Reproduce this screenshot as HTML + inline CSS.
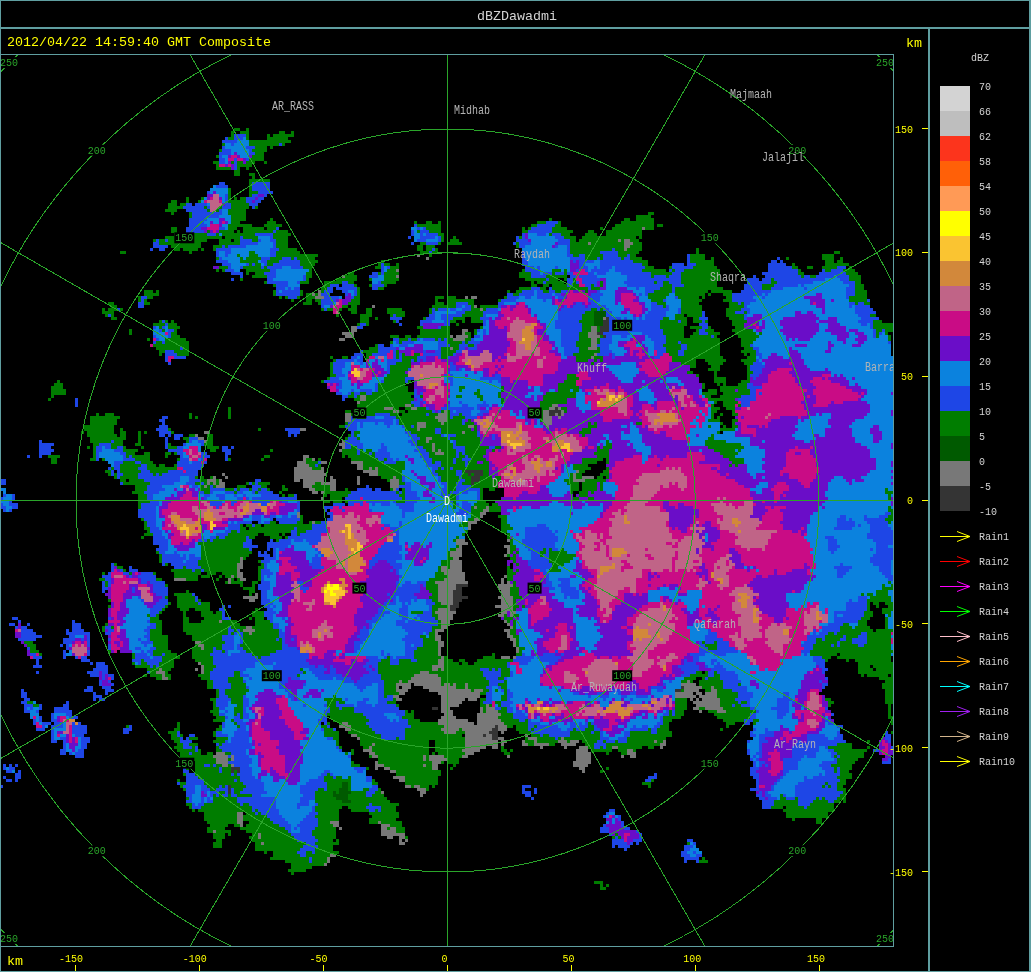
<!DOCTYPE html>
<html><head><meta charset="utf-8"><title>dBZDawadmi</title>
<style>html,body{margin:0;padding:0;background:#000;overflow:hidden}svg{display:block}text{font-family:"Liberation Mono",monospace;white-space:pre}.b{font-size:13.33px}.s{font-size:10px}</style></head><body>
<svg width="1031" height="972" viewBox="0 0 1031 972">
<rect width="1031" height="972" fill="#000"/>
<defs><clipPath id="mc"><rect x="1" y="55" width="892" height="891"/></clipPath></defs>
<g clip-path="url(#mc)">
<!--RADAR-->
<defs><clipPath id="t1"><rect x="0.0" y="55.0" width="300.0" height="300.0"/></clipPath><clipPath id="t2"><rect x="0.0" y="355.0" width="300.0" height="300.0"/></clipPath><clipPath id="t3"><rect x="0.0" y="655.0" width="300.0" height="291.0"/></clipPath><clipPath id="t4"><rect x="300.0" y="55.0" width="300.0" height="300.0"/></clipPath><clipPath id="t5"><rect x="400.0" y="205.0" width="200.0" height="150.0"/></clipPath><clipPath id="t6"><rect x="300.0" y="355.0" width="200.0" height="150.0"/></clipPath><clipPath id="t7"><rect x="500.0" y="355.0" width="200.0" height="150.0"/></clipPath><clipPath id="t8"><rect x="700.0" y="355.0" width="200.0" height="150.0"/></clipPath><clipPath id="t9"><rect x="300.0" y="505.0" width="200.0" height="150.0"/></clipPath><clipPath id="t10"><rect x="500.0" y="505.0" width="200.0" height="150.0"/></clipPath><clipPath id="t11"><rect x="700.0" y="505.0" width="200.0" height="150.0"/></clipPath><clipPath id="t12"><rect x="300.0" y="655.0" width="200.0" height="150.0"/></clipPath><clipPath id="t13"><rect x="500.0" y="655.0" width="200.0" height="150.0"/></clipPath><clipPath id="t14"><rect x="700.0" y="655.0" width="200.0" height="150.0"/></clipPath><clipPath id="t15"><rect x="300.0" y="805.0" width="300.0" height="141.0"/></clipPath><clipPath id="t16"><rect x="600.0" y="805.0" width="293.0" height="141.0"/></clipPath><clipPath id="t17"><rect x="600.0" y="205.0" width="300.0" height="150.0"/></clipPath><clipPath id="t18"><rect x="200.0" y="450.0" width="200.0" height="200.0"/></clipPath><clipPath id="t19"><rect x="675.0" y="282.0" width="90.0" height="158.0"/></clipPath><clipPath id="t20"><rect x="320.0" y="715.0" width="75.0" height="80.0"/></clipPath><filter id="rough" x="0" y="50" width="900" height="900" filterUnits="userSpaceOnUse" color-interpolation-filters="sRGB"><feTurbulence type="fractalNoise" baseFrequency="0.1" numOctaves="4" seed="7" result="n"/><feDisplacementMap in="SourceGraphic" in2="n" scale="20" xChannelSelector="R" yChannelSelector="G" result="d"/><feFlood x="1" y="51" width="1" height="1" flood-color="#000"/><feComposite width="3" height="3"/><feTile result="t"/><feComposite in="d" in2="t" operator="in"/><feMorphology operator="dilate" radius="1"/></filter></defs>
<g filter="url(#rough)" shape-rendering="crispEdges"><g clip-path="url(#t1)">
<path d="M216.0 167.7L222.2 138.3L234.6 132.2L248.5 126.6L250.0 135.2L262.3 139.9L277.8 135.9L293.2 132.8L293.2 138.3L277.8 144.5L265.4 147.6L265.4 161.5L246.9 167.7L228.4 172.3Z" fill="#007d00"/>
<path d="M217.6 166.1L223.8 139.9L236.1 133.7L246.9 132.2L248.5 144.5L256.2 147.6L254.6 156.9L234.6 166.1Z" fill="#1e46e6"/>
<path d="M228.4 147.6L243.8 139.9L250.0 147.6L246.9 156.9L228.4 159.9Z" fill="#0b82de"/>
<path d="M219.8 164.6L231.5 155.3L246.9 153.8L246.9 159.9L228.4 166.7Z" fill="#6a0dc8"/>
<path d="M220.7 163.6L234.6 156.9L246.9 155.3L240.7 161.5L225.3 166.1Z" fill="#c90c85"/>
<path d="M276.2 141.4L282.4 139.9L282.4 143.9L276.2 144.5Z" fill="#1e46e6"/>
<path d="M162.0 214.0L166.7 206.2L179.0 202.5L185.2 199.4L197.5 201.6L206.8 190.8L223.8 182.2L229.9 187.7L233.0 197.0L222.2 209.3L203.7 217.0L191.4 215.5L185.2 209.3L172.8 210.9Z" fill="#007d00"/>
<path d="M179.0 209.3L188.3 203.1L200.6 203.1L205.2 192.3L223.8 183.1L229.9 190.8L228.4 201.6L216.0 210.9L200.6 214.0L185.2 212.4Z" fill="#1e46e6"/>
<path d="M202.2 200.1L209.9 190.8L222.2 187.7L226.9 197.0L219.1 209.3L205.2 210.9Z" fill="#0b82de"/>
<path d="M206.2 198.5L213.0 193.3L222.2 197.0L220.7 206.2L209.9 210.9Z" fill="#6a0dc8"/>
<path d="M207.7 200.1L214.5 194.8L222.2 199.4L219.8 206.9L209.9 209.3Z" fill="#c90c85"/>
<path d="M209.3 200.7L215.4 197.0L220.7 201.6L217.6 207.8L209.9 208.4Z" fill="#c06487"/>
<path d="M148.1 247.9L166.7 230.9L185.2 232.5L191.4 215.5L216.0 209.3L234.6 200.1L246.9 190.8L250.0 180.0L265.4 176.9L274.7 187.7L262.3 200.1L246.9 209.3L243.8 227.8L228.4 235.6L203.7 240.2L197.5 251.0L182.1 252.5L172.8 244.8L160.5 244.8Z" fill="#007d00"/>
<path d="M149.1 247.9L163.6 238.6L172.8 243.3L169.8 249.4L157.4 246.4Z" fill="#1e46e6"/>
<path d="M182.1 230.9L191.4 217.0L216.0 210.9L231.5 206.2L228.4 227.8L213.0 234.0L197.5 235.6L185.2 234.0Z" fill="#1e46e6"/>
<path d="M243.8 203.1L251.5 187.7L268.5 181.5L273.1 189.3L262.3 198.5L250.0 207.8Z" fill="#1e46e6"/>
<path d="M200.6 230.9L206.8 218.6L222.2 215.5L231.5 209.3L229.9 226.3L216.0 232.5Z" fill="#0b82de"/>
<path d="M204.3 227.8L213.0 220.1L222.2 221.7L219.1 230.3L208.3 232.5Z" fill="#6a0dc8"/>
<path d="M206.2 227.2L214.5 221.7L221.6 223.2L217.6 230.3L209.3 231.5Z" fill="#c90c85"/>
<path d="M250.0 200.1L256.2 190.8L262.3 192.3L256.2 203.1Z" fill="#6a0dc8"/>
<path d="M213.0 252.5L222.2 240.2L246.9 227.8L256.2 217.0L257.7 227.8L274.7 220.1L277.8 227.8L285.5 229.4L287.0 246.4L300.0 252.5L300.0 298.8L287.0 300.4L274.7 294.2L271.6 281.9L262.3 277.2L246.9 271.0L237.7 280.3L228.4 271.0L217.6 271.0Z" fill="#007d00"/>
<path d="M214.5 255.6L222.2 246.4L243.8 240.2L265.4 234.0L276.2 232.5L274.7 252.5L262.3 264.9L246.9 268.0L237.7 278.8L229.9 271.0L219.1 268.0Z" fill="#1e46e6"/>
<path d="M260.8 272.6L271.6 264.9L287.0 255.6L300.0 258.7L300.0 295.7L287.0 298.8L276.2 292.7L273.1 281.9Z" fill="#1e46e6"/>
<path d="M222.2 252.5L246.9 243.3L271.6 237.1L271.6 249.4L259.3 261.8L246.9 264.9L237.7 274.1L231.5 264.9L222.2 261.8Z" fill="#0b82de"/>
<path d="M240.7 260.2L251.5 251.0L262.3 258.7L251.5 268.0Z" fill="#007d00"/>
<path d="M271.6 274.1L287.0 264.9L300.0 268.0L300.0 283.4L284.0 289.6Z" fill="#0b82de"/>
<path d="M216.0 264.9L219.8 261.8L219.8 269.5L217.0 270.1Z" fill="#6a0dc8"/>
<path d="M116.7 258.7L120.4 255.0L122.2 257.2L118.8 260.9Z" fill="#007d00"/>
<path d="M135.8 301.9L145.1 291.1L159.0 288.0L159.0 294.2L151.2 298.8L145.1 306.5L138.9 309.6Z" fill="#007d00"/>
<path d="M137.3 301.9L142.0 297.3L148.1 298.8L143.5 308.1L138.9 308.7Z" fill="#1e46e6"/>
<path d="M104.9 314.3L111.1 305.0L123.5 304.4L125.0 309.6L118.8 317.3L112.7 315.8Z" fill="#007d00"/>
<path d="M112.7 311.2L117.3 306.5L121.0 310.6L116.7 315.8Z" fill="#1e46e6"/>
<path d="M128.1 337.4L131.2 320.4L134.3 317.3L134.3 326.6L132.1 337.4Z" fill="#007d00"/>
<path d="M148.1 339.0L154.3 328.1L169.8 319.8L175.9 323.5L177.5 332.8L188.3 343.6L189.8 355.0L160.5 355.0L154.3 343.6Z" fill="#007d00"/>
<path d="M149.7 339.0L155.9 329.7L169.8 321.0L171.3 332.8L163.6 342.0L154.3 343.6Z" fill="#1e46e6"/>
<path d="M154.3 332.8L165.1 323.5L169.8 326.6L163.6 337.4L155.9 340.5Z" fill="#0b82de"/>
<path d="M151.2 340.5L159.0 332.8L160.5 336.5L153.7 343.6Z" fill="#c90c85"/>
<path d="M160.5 355.0L166.7 348.2L179.0 348.2L185.2 355.0Z" fill="#1e46e6"/>
<path d="M293.2 168.6L300.0 166.7L300.0 169.8L293.2 170.7Z" fill="#007d00"/>
</g>
<g clip-path="url(#t2)">
<path d="M162.0 355.0L183.6 355.0L179.0 362.7L168.2 364.3Z" fill="#1e46e6"/>
<path d="M166.7 357.5L172.8 356.5L174.4 360.6L168.2 361.2Z" fill="#c90c85"/>
<path d="M47.8 399.8L52.5 384.3L66.4 382.2L66.4 387.4L58.6 395.1L50.9 401.3Z" fill="#007d00"/>
<path d="M74.1 404.4L78.7 393.6L80.9 395.1L77.2 406.9Z" fill="#1e46e6"/>
<path d="M38.6 453.8L41.7 443.0L49.4 444.5L50.9 453.8L43.2 456.9Z" fill="#1e46e6"/>
<path d="M49.4 453.8L57.1 452.2L58.6 464.6L52.5 461.5Z" fill="#007d00"/>
<path d="M22.2 461.5L25.3 455.3L25.9 462.4Z" fill="#1e46e6"/>
<path d="M0.0 475.4L4.6 478.5L6.2 490.8L15.4 503.1L13.9 514.0L6.2 512.4L0.0 506.2Z" fill="#1e46e6"/>
<path d="M1.5 487.7L6.2 492.3L10.8 503.1L7.7 509.3L2.5 503.1Z" fill="#0b82de"/>
<path d="M223.8 412.1L229.9 402.8L236.1 412.1L233.0 416.7L226.9 416.1Z" fill="#007d00"/>
<path d="M192.9 413.6L196.6 413.0L196.6 416.7L192.9 417.3Z" fill="#007d00"/>
<path d="M143.5 409.0L145.7 407.5L145.1 413.0Z" fill="#007d00"/>
<path d="M256.2 427.5L261.7 427.5L261.7 432.2L256.2 432.2Z" fill="#007d00"/>
<path d="M287.0 429.1L291.7 425.4L297.8 426.6L300.0 424.4L300.0 435.2L290.1 435.9Z" fill="#1e46e6"/>
<path d="M294.8 424.4L300.0 423.5L300.0 430.6L296.3 429.1Z" fill="#007d00"/>
<path d="M263.9 453.8L271.6 450.7L273.1 456.9L265.4 458.4Z" fill="#007d00"/>
<path d="M293.2 467.7L300.0 466.1L300.0 478.5L294.8 478.5Z" fill="#787878"/>
<path d="M221.6 453.8L226.9 444.5L230.9 447.6L229.9 459.9L225.3 463.0Z" fill="#1e46e6"/>
<path d="M225.3 459.9L230.9 456.9L229.9 466.1L226.9 466.1Z" fill="#007d00"/>
<path d="M163.6 432.2L169.8 429.1L170.4 456.9L166.0 456.9Z" fill="#007d00"/>
<path d="M154.3 429.1L160.5 418.3L166.7 419.8L168.2 435.2L169.8 450.7L165.1 453.8L162.0 435.2Z" fill="#1e46e6"/>
<path d="M137.3 441.4L142.0 429.1L145.7 430.6L140.4 447.6Z" fill="#007d00"/>
<path d="M79.6 427.5L89.5 421.4L98.8 418.3L117.3 412.1L118.8 432.2L123.5 444.5L135.8 450.7L154.3 459.9L166.7 469.2L175.9 456.9L180.6 435.2L194.4 431.5L213.0 438.3L216.0 447.6L209.9 459.9L203.7 469.2L203.7 478.5L228.4 480.0L246.9 484.6L256.2 480.0L265.4 478.5L268.5 487.7L300.0 489.3L300.0 552.5L290.1 555.6L277.8 552.5L265.4 540.2L256.2 552.5L243.8 552.5L243.8 577.2L234.6 586.5L222.2 584.9L213.0 571.0L197.5 577.2L188.3 583.4L174.4 577.2L172.8 568.0L160.5 561.8L154.3 540.2L145.1 534.0L142.0 521.7L137.3 509.3L142.0 500.1L132.7 500.1L132.7 484.6L120.4 481.5L108.0 472.3L104.9 461.5L92.6 459.9L91.0 438.3L80.9 435.9Z" fill="#007d00"/>
<path d="M197.5 433.7L206.8 433.7L205.2 439.9L197.5 439.9Z" fill="#787878"/>
<path d="M205.2 480.0L228.4 480.0L226.9 486.2L206.8 486.2Z" fill="#787878"/>
<path d="M225.3 581.9L237.7 578.8L243.8 552.5L239.2 552.5L236.1 571.0L225.3 577.2Z" fill="#787878"/>
<path d="M172.8 575.7L185.2 577.2L185.2 583.4L175.9 581.9Z" fill="#787878"/>
<path d="M92.6 458.4L95.7 444.5L104.9 441.4L123.5 444.5L123.5 453.8L135.8 459.9L148.1 469.2L160.5 476.9L175.9 472.3L179.0 438.3L194.4 435.9L205.2 444.5L203.7 459.9L197.5 478.5L216.0 487.7L234.6 490.8L246.9 490.8L262.3 487.7L277.8 492.3L300.0 493.9L300.0 527.8L290.1 534.0L271.6 530.9L259.3 527.8L246.9 534.0L228.4 537.1L216.0 540.2L206.8 546.4L206.8 564.9L197.5 571.0L182.1 571.0L166.7 564.9L160.5 552.5L151.2 534.0L145.1 518.6L140.4 506.2L148.1 500.1L145.1 481.5L135.8 478.5L123.5 484.6L117.3 476.9L109.6 472.3L108.0 463.0Z" fill="#1e46e6"/>
<path d="M120.4 463.0L132.7 459.9L142.0 472.3L135.8 478.5L123.5 481.5Z" fill="#007d00"/>
<path d="M98.8 456.9L101.9 446.0L117.3 447.6L123.5 459.9L111.1 466.1Z" fill="#0b82de"/>
<path d="M154.3 503.1L160.5 487.7L172.8 481.5L185.2 478.5L197.5 484.6L216.0 490.8L234.6 495.4L253.1 493.9L277.8 497.0L300.0 500.1L300.0 521.7L277.8 524.8L256.2 523.2L240.7 527.8L222.2 534.0L209.9 540.2L200.6 552.5L185.2 558.7L172.8 555.6L163.6 540.2L157.4 521.7Z" fill="#0b82de"/>
<path d="M180.6 444.5L188.3 439.9L200.6 444.5L200.6 459.9L191.4 464.6L182.1 459.9Z" fill="#0b82de"/>
<path d="M157.4 509.3L166.7 500.1L179.0 490.8L185.2 484.6L197.5 487.7L209.9 497.0L228.4 500.1L246.9 498.5L271.6 500.1L293.2 503.1L300.0 504.7L300.0 515.5L277.8 518.6L256.2 518.6L240.7 521.7L222.2 530.9L203.7 540.2L191.4 549.4L179.0 552.5L169.8 540.2L163.6 524.8Z" fill="#6a0dc8"/>
<path d="M160.5 512.4L169.8 506.2L182.1 493.9L188.3 487.7L197.5 493.9L209.9 501.6L234.6 503.1L256.2 500.1L277.8 501.6L296.3 506.2L296.3 512.4L277.8 514.0L256.2 515.5L237.7 518.6L222.2 526.3L203.7 537.1L191.4 543.3L182.1 540.2L175.9 552.5L172.8 540.2L166.7 527.8Z" fill="#c90c85"/>
<path d="M183.6 447.6L192.9 444.5L200.6 453.8L197.5 463.0L188.3 461.5Z" fill="#c90c85"/>
<path d="M177.5 466.1L183.6 463.0L185.2 472.3L179.0 473.8Z" fill="#c90c85"/>
<path d="M180.6 487.7L188.3 484.6L191.4 492.3L183.6 495.4Z" fill="#c90c85"/>
<path d="M168.2 515.5L175.9 510.9L191.4 518.6L203.7 503.1L216.0 506.2L234.6 507.8L246.9 503.1L271.6 503.1L271.6 507.8L253.1 510.9L234.6 514.0L222.2 521.7L216.0 530.9L203.7 532.5L191.4 537.1L179.0 534.0L171.3 524.8Z" fill="#c06487"/>
<path d="M188.3 450.7L196.0 449.1L197.5 458.4L189.8 458.4Z" fill="#c06487"/>
<path d="M182.1 487.7L188.3 487.1L188.9 492.3L183.0 493.0Z" fill="#c06487"/>
<path d="M171.3 518.6L179.0 515.5L191.4 524.8L200.6 515.5L206.8 509.3L216.0 512.4L219.1 526.3L209.9 529.4L197.5 530.9L185.2 535.6L175.9 527.8Z" fill="#d2883b"/>
<path d="M259.3 503.1L271.6 502.5L271.6 506.2L259.3 506.9Z" fill="#d2883b"/>
<path d="M182.1 526.3L186.7 524.8L187.7 532.5L183.0 533.4Z" fill="#fac431"/>
<path d="M208.3 521.7L213.0 521.0L213.6 529.4L209.3 530.3Z" fill="#fac431"/>
<path d="M243.8 540.2L253.1 537.1L256.2 546.4L246.9 551.0Z" fill="#1e46e6"/>
<path d="M246.9 598.8L256.2 571.0L262.3 555.6L271.6 546.4L290.1 555.6L300.0 552.5L300.0 655.0L234.6 655.0L243.8 632.8L256.2 617.3Z" fill="#007d00"/>
<path d="M259.3 568.0L271.6 546.4L284.0 540.2L300.0 540.2L300.0 655.0L271.6 655.0L265.4 632.8L262.3 608.1L268.5 589.6Z" fill="#1e46e6"/>
<path d="M268.5 571.0L277.8 552.5L290.1 546.4L300.0 547.9L300.0 632.8L284.0 639.0L274.7 620.4L271.6 595.7Z" fill="#0b82de"/>
<path d="M274.7 558.7L284.0 549.4L300.0 552.5L300.0 626.6L287.0 629.7L280.9 611.2L284.0 589.6L277.8 571.0Z" fill="#6a0dc8"/>
<path d="M277.8 555.6L287.0 552.5L293.2 564.9L300.0 571.0L300.0 620.4L290.1 623.5L287.0 601.9L290.1 583.4L282.4 568.0Z" fill="#c90c85"/>
<path d="M290.1 589.6L300.0 583.4L300.0 601.9L293.2 605.0Z" fill="#c06487"/>
<path d="M246.9 597.3L251.5 595.7L251.5 601.9L246.9 603.5Z" fill="#787878"/>
<path d="M240.7 629.7L256.2 625.1L256.2 632.8L243.8 635.9Z" fill="#787878"/>
<path d="M256.2 537.1L262.3 534.0L268.5 540.2L265.4 552.5L259.3 555.6L256.2 546.4Z" fill="#000000"/>
<path d="M175.9 595.7L185.2 592.7L197.5 598.8L213.0 611.2L228.4 614.3L243.8 623.5L246.9 635.9L234.6 655.0L188.3 655.0L197.5 639.0L185.2 632.8L182.1 614.3Z" fill="#007d00"/>
<path d="M185.2 611.2L194.4 605.0L203.7 614.3L200.6 626.6L189.8 623.5Z" fill="#000000"/>
<path d="M189.8 589.6L197.5 594.2L203.7 601.9L205.2 611.2L199.1 605.0L192.9 598.8Z" fill="#1e46e6"/>
<path d="M216.0 611.2L225.3 606.5L231.5 617.3L228.4 626.6L220.7 620.4Z" fill="#1e46e6"/>
<path d="M216.0 632.8L234.6 629.7L246.9 639.0L240.7 655.0L213.0 655.0L222.2 642.0Z" fill="#1e46e6"/>
<path d="M228.4 642.0L237.7 639.0L240.7 651.3L231.5 655.0Z" fill="#0b82de"/>
<path d="M213.0 614.3L219.1 612.7L222.2 629.7L216.0 631.2Z" fill="#787878"/>
<path d="M191.4 642.0L200.6 640.5L200.6 646.7L191.4 648.2Z" fill="#787878"/>
<path d="M101.9 580.3L109.6 571.0L118.8 563.3L129.6 568.0L138.9 572.6L149.7 575.7L160.5 575.7L168.2 589.6L168.2 605.0L160.5 617.3L157.4 626.6L166.7 639.0L172.8 655.0L108.0 655.0L106.5 617.3L108.0 595.7Z" fill="#007d00"/>
<path d="M103.4 589.6L108.0 583.4L106.5 577.2L111.1 571.0L118.8 564.9L129.6 569.5L138.9 574.1L149.7 577.2L160.5 578.8L166.7 592.7L163.6 608.1L154.3 620.4L154.3 632.8L160.5 648.2L154.3 655.0L109.6 655.0L108.0 620.4L109.6 598.8Z" fill="#1e46e6"/>
<path d="M114.2 601.9L123.5 589.6L135.8 595.7L145.1 601.9L154.3 601.9L148.1 617.3L145.1 632.8L151.2 648.2L135.8 655.0L123.5 655.0L117.3 632.8Z" fill="#0b82de"/>
<path d="M108.0 589.6L112.7 574.1L118.8 568.0L129.6 574.1L138.9 578.8L148.1 583.4L157.4 589.6L160.5 601.9L154.3 611.2L145.1 598.8L135.8 592.7L129.6 595.7L126.5 611.2L123.5 626.6L129.6 639.0L126.5 655.0L112.7 655.0L109.6 626.6Z" fill="#6a0dc8"/>
<path d="M111.1 589.6L115.7 575.7L121.9 572.6L132.7 580.3L145.1 584.9L154.3 592.7L157.4 601.9L151.2 601.9L142.0 592.7L129.6 586.5L121.9 589.6L118.8 608.1L115.7 626.6L120.4 642.0L117.3 655.0L113.6 655.0L111.7 626.6Z" fill="#c90c85"/>
<path d="M118.8 577.2L129.6 581.9L142.0 586.5L151.2 594.2L154.3 601.9L148.1 598.8L138.9 591.1L126.5 584.9Z" fill="#c06487"/>
<path d="M114.2 623.5L118.8 620.4L121.9 632.8L117.3 635.9Z" fill="#c06487"/>
<path d="M148.1 614.3L160.5 617.3L166.7 639.0L172.8 655.0L154.3 655.0L151.2 632.8Z" fill="#007d00"/>
<path d="M135.8 639.0L148.1 635.9L151.2 645.1L138.9 648.2Z" fill="#1e46e6"/>
<path d="M63.3 648.2L69.4 632.8L72.5 623.5L81.8 626.6L89.5 635.9L92.6 655.0L66.4 655.0Z" fill="#1e46e6"/>
<path d="M69.4 645.1L74.1 632.8L83.3 634.3L88.0 648.2L86.4 655.0L71.0 655.0Z" fill="#0b82de"/>
<path d="M71.0 646.7L75.6 637.4L84.9 639.0L88.0 651.3L86.4 655.0L72.5 655.0Z" fill="#6a0dc8"/>
<path d="M72.5 648.2L77.2 640.5L84.9 642.0L86.4 655.0L74.1 655.0Z" fill="#c90c85"/>
<path d="M74.7 649.8L78.7 643.6L83.3 646.7L84.0 655.0L75.6 655.0Z" fill="#c06487"/>
<path d="M12.3 617.3L17.0 615.8L24.7 629.7L30.9 626.6L35.5 639.0L37.0 655.0L27.8 655.0L18.5 639.0Z" fill="#1e46e6"/>
<path d="M13.9 620.4L18.5 623.5L24.7 639.0L29.3 655.0L26.2 655.0L17.0 632.8Z" fill="#6a0dc8"/>
<path d="M15.4 625.1L19.1 626.6L23.1 639.0L21.0 640.5Z" fill="#c90c85"/>
<path d="M17.9 629.7L20.4 630.3L22.2 637.4L19.1 636.5Z" fill="#c06487"/>
<path d="M29.3 645.1L35.5 642.0L37.0 655.0L30.9 655.0Z" fill="#007d00"/>
<path d="M100.3 581.9L103.4 580.3L104.9 592.7L101.9 591.1Z" fill="#1e46e6"/>
</g>
<g clip-path="url(#t3)">
<path d="M26.2 650.0L37.0 650.0L40.1 671.6L35.5 665.4L29.3 656.2Z" fill="#1e46e6"/>
<path d="M29.3 651.5L34.0 651.5L34.6 659.3L30.9 657.7Z" fill="#c90c85"/>
<path d="M63.3 650.0L91.0 650.0L88.0 659.3L81.8 662.3L71.0 654.6Z" fill="#1e46e6"/>
<path d="M74.1 650.0L86.4 650.0L83.3 657.7L77.2 654.6Z" fill="#c90c85"/>
<path d="M89.5 663.9L98.8 662.3L108.0 668.5L115.7 690.1L108.0 694.8L98.8 680.9Z" fill="#1e46e6"/>
<path d="M98.8 671.6L106.5 673.1L111.1 687.0L106.5 688.6Z" fill="#6a0dc8"/>
<path d="M101.9 676.2L106.5 677.2L108.6 685.5L104.9 684.6Z" fill="#c90c85"/>
<path d="M84.0 685.5L89.5 684.6L100.3 697.8L95.7 702.5L89.5 696.3Z" fill="#1e46e6"/>
<path d="M18.5 691.7L21.6 689.5L29.3 702.5L38.6 705.6L46.3 724.1L45.7 733.3L38.6 731.8L30.9 717.9L23.1 705.6Z" fill="#1e46e6"/>
<path d="M27.8 705.6L37.0 708.6L43.2 724.1L38.6 727.2L30.9 714.8Z" fill="#0b82de"/>
<path d="M35.5 714.8L40.1 716.4L42.6 727.2L38.6 725.6Z" fill="#c90c85"/>
<path d="M27.8 704.0L32.4 703.1L33.3 708.6L29.3 709.3Z" fill="#007d00"/>
<path d="M50.9 711.7L55.6 707.1L66.4 703.1L72.5 716.4L81.8 730.2L91.0 747.2L77.2 758.6L64.8 754.9L57.1 742.6L50.9 727.2Z" fill="#1e46e6"/>
<path d="M54.0 716.4L64.8 708.6L72.5 724.1L83.3 742.6L75.6 753.4L66.4 748.8L60.2 736.4Z" fill="#0b82de"/>
<path d="M57.1 717.9L64.8 711.7L72.5 727.2L78.7 742.6L72.5 748.8L64.8 739.5L60.2 727.2Z" fill="#6a0dc8"/>
<path d="M59.3 719.4L65.4 713.3L72.5 728.7L74.1 741.0L67.9 739.5L61.7 728.7Z" fill="#c90c85"/>
<path d="M61.1 724.1L66.4 719.4L71.6 730.2L69.4 738.0L64.2 731.8Z" fill="#c06487"/>
<path d="M69.4 719.4L72.5 718.5L73.5 724.1L70.4 724.7Z" fill="#d2883b"/>
<path d="M3.1 767.3L12.3 760.5L17.0 765.7L19.1 779.6L23.1 785.8L18.5 785.8L9.3 779.6Z" fill="#1e46e6"/>
<path d="M7.7 768.8L13.0 765.7L15.4 776.5L10.8 776.5Z" fill="#0b82de"/>
<path d="M0.0 785.8L2.5 787.3L1.5 790.4L0.0 789.5Z" fill="#1e46e6"/>
<path d="M122.8 727.2L125.9 725.0L128.1 728.7L125.0 730.2Z" fill="#007d00"/>
<path d="M124.1 728.7L129.6 727.8L129.6 731.8L125.0 732.1Z" fill="#1e46e6"/>
<path d="M123.5 650.0L188.3 650.0L172.8 662.3L168.2 676.2L169.8 687.0L160.5 680.9L151.2 676.2L138.9 665.4L129.6 657.7Z" fill="#007d00"/>
<path d="M126.5 650.0L166.7 650.0L160.5 662.3L151.2 668.5L138.9 660.8Z" fill="#1e46e6"/>
<path d="M132.7 650.0L154.3 650.0L151.2 657.7L142.0 656.2Z" fill="#0b82de"/>
<path d="M157.4 668.5L165.1 667.0L166.7 680.9L169.8 687.0L165.1 684.0L160.5 676.2Z" fill="#787878"/>
<path d="M188.3 650.0L300.0 650.0L300.0 872.2L290.1 870.7L284.0 859.9L271.6 855.2L262.3 856.8L254.6 849.1L253.1 835.2L245.4 827.5L234.6 825.9L225.3 833.6L223.8 844.4L214.5 842.9L206.8 832.1L205.2 819.8L197.5 810.5L186.7 804.3L182.1 792.0L179.0 779.6L185.2 771.9L192.9 768.8L192.9 759.6L182.1 758.0L171.3 741.0L172.8 722.5L185.2 731.8L197.5 742.6L205.2 754.9L214.5 756.5L217.6 742.6L216.0 721.0L211.4 693.2L200.6 668.5L194.4 659.3Z" fill="#007d00"/>
<path d="M213.0 680.9L216.0 668.5L209.9 650.0L300.0 650.0L300.0 847.5L290.1 835.2L277.8 822.8L265.4 816.7L253.1 804.3L243.8 788.9L234.6 773.5L228.4 754.9L220.7 748.8L222.2 724.1L216.0 699.4Z" fill="#1e46e6"/>
<path d="M228.4 680.9L237.7 668.5L246.9 687.0L243.8 711.7L234.6 724.1L229.9 705.6Z" fill="#007d00"/>
<path d="M225.3 705.6L231.5 699.4L237.7 727.2L231.5 742.6L225.3 730.2Z" fill="#0b82de"/>
<path d="M246.9 668.5L265.4 659.3L277.8 674.7L284.0 693.2L300.0 705.6L300.0 835.2L287.0 822.8L277.8 804.3L265.4 792.0L253.1 773.5L246.9 748.8L243.8 724.1L250.0 699.4Z" fill="#0b82de"/>
<path d="M250.0 711.7L256.2 696.3L268.5 687.0L277.8 696.3L287.0 711.7L300.0 721.0L300.0 785.8L290.1 785.8L277.8 779.6L262.3 773.5L253.1 754.9L250.0 733.3Z" fill="#6a0dc8"/>
<path d="M253.1 714.8L257.7 702.5L262.3 705.6L265.4 724.1L274.7 742.6L284.0 761.1L287.0 779.6L277.8 776.5L265.4 767.3L256.2 748.8L253.1 730.2Z" fill="#c90c85"/>
<path d="M277.8 696.3L287.0 702.5L300.0 717.9L300.0 742.6L290.1 730.2L280.9 717.9Z" fill="#c90c85"/>
<path d="M254.6 711.7L258.6 707.1L261.7 721.0L258.6 727.2Z" fill="#c06487"/>
<path d="M287.0 674.7L296.3 677.8L300.0 687.0L300.0 699.4L290.1 690.1Z" fill="#6a0dc8"/>
<path d="M182.1 773.5L191.4 771.9L200.6 779.6L211.4 788.9L213.0 801.2L203.7 807.4L192.9 807.4L185.2 795.1Z" fill="#1e46e6"/>
<path d="M192.9 788.9L200.6 785.8L209.9 795.1L205.2 804.3L196.0 802.8Z" fill="#0b82de"/>
<path d="M197.5 793.5L203.7 792.0L206.2 799.7L200.0 801.2Z" fill="#6a0dc8"/>
<path d="M177.5 731.8L183.6 730.9L192.9 742.6L197.5 751.9L191.4 753.4L183.6 742.6Z" fill="#1e46e6"/>
<path d="M213.0 782.7L228.4 785.8L243.8 798.1L256.2 801.2L257.7 807.4L243.8 804.3L228.4 795.1L216.0 790.4Z" fill="#1e46e6"/>
<path d="M203.7 762.7L209.9 761.1L220.7 768.8L216.0 771.9Z" fill="#1e46e6"/>
<path d="M213.0 756.5L220.7 754.9L231.5 761.1L234.6 768.8L225.3 767.3L216.0 762.7Z" fill="#787878"/>
<path d="M225.3 781.2L233.0 782.7L236.1 792.0L229.9 793.5Z" fill="#343434"/>
<path d="M231.5 765.7L239.2 768.8L240.7 773.5L234.6 771.9Z" fill="#343434"/>
<path d="M234.6 816.7L242.3 815.1L243.8 821.3L236.1 822.8Z" fill="#787878"/>
<path d="M242.3 815.1L246.9 816.7L248.5 822.8L243.8 822.8Z" fill="#000000"/>
<path d="M259.3 835.2L265.4 834.6L266.0 839.8L259.9 840.7Z" fill="#787878"/>
<path d="M196.0 663.9L203.7 665.4L203.7 670.1L197.5 669.1Z" fill="#787878"/>
<path d="M209.9 836.7L213.0 835.2L213.6 838.9Z" fill="#787878"/>
</g>
<g clip-path="url(#t4)">
<path d="M411.1 240.2L418.8 224.8L429.6 223.2L442.6 227.8L443.5 243.3L435.8 251.0L421.9 254.1L415.7 247.9Z" fill="#007d00"/>
<path d="M410.5 240.2L415.7 229.4L423.5 227.2L429.6 232.5L440.4 237.1L438.9 244.8L429.6 247.9L418.8 246.4Z" fill="#1e46e6"/>
<path d="M414.2 237.1L418.8 229.4L423.5 230.9L425.0 238.6L418.8 243.3Z" fill="#0b82de"/>
<path d="M428.1 237.1L435.8 237.1L438.3 241.7L431.2 244.8Z" fill="#0b82de"/>
<path d="M451.2 238.6L456.8 238.6L456.8 243.9L451.2 243.9Z" fill="#007d00"/>
<path d="M414.8 254.1L425.0 254.1L425.0 257.2L414.8 257.2Z" fill="#787878"/>
<path d="M300.0 249.4L309.3 251.0L317.0 255.6L313.9 271.0L306.2 283.4L300.0 298.8Z" fill="#007d00"/>
<path d="M300.0 264.9L306.2 268.0L303.1 283.4L300.0 289.6Z" fill="#1e46e6"/>
<path d="M300.0 266.4L304.6 268.6L301.5 278.8L300.0 280.3Z" fill="#0b82de"/>
<path d="M370.4 288.0L374.1 271.0L383.3 264.9L397.2 263.3L400.3 271.0L392.6 284.9L377.2 292.0Z" fill="#007d00"/>
<path d="M371.6 286.5L375.6 272.6L384.9 268.0L389.5 274.1L383.3 284.9L375.6 289.6Z" fill="#1e46e6"/>
<path d="M375.6 280.3L379.6 272.6L384.9 272.6L382.7 281.9L377.2 284.9Z" fill="#0b82de"/>
<path d="M394.1 272.6L399.4 271.0L398.8 278.8L395.1 278.8Z" fill="#787878"/>
<path d="M300.0 301.9L312.3 292.7L330.9 281.9L346.3 274.1L355.6 275.7L357.1 286.5L364.8 295.7L358.6 305.0L346.3 311.2L330.9 311.2L318.5 305.0L306.2 306.5Z" fill="#007d00"/>
<path d="M318.5 298.8L327.8 289.6L346.3 281.9L355.6 283.4L357.1 298.8L346.3 308.1L330.9 309.6L321.6 303.5Z" fill="#1e46e6"/>
<path d="M329.3 292.7L338.6 288.0L343.2 292.0L334.0 296.4Z" fill="#000000"/>
<path d="M327.8 301.9L337.0 297.3L349.4 289.6L354.0 294.2L349.4 305.0L337.0 308.7Z" fill="#0b82de"/>
<path d="M329.3 305.0L340.1 295.7L350.9 292.7L350.9 301.9L340.1 308.7L330.9 309.6Z" fill="#6a0dc8"/>
<path d="M330.9 306.5L340.1 298.8L346.3 298.8L343.2 306.5L334.0 310.6Z" fill="#c90c85"/>
<path d="M330.9 306.5L338.6 301.9L340.1 305.6L333.3 309.6Z" fill="#c06487"/>
<path d="M312.3 298.8L321.6 292.7L323.1 297.3L315.4 301.9Z" fill="#787878"/>
<path d="M343.2 275.7L350.9 274.1L350.9 278.8L344.8 278.8Z" fill="#787878"/>
<path d="M357.1 323.5L361.7 311.2L372.5 306.5L377.2 311.2L369.4 320.4L366.4 328.1L360.2 329.7Z" fill="#007d00"/>
<path d="M358.6 325.1L363.3 320.4L366.4 323.5L363.3 328.1Z" fill="#1e46e6"/>
<path d="M334.0 339.0L346.3 334.3L357.1 325.1L358.6 329.7L350.9 337.4L346.3 343.6L337.0 342.0Z" fill="#787878"/>
<path d="M366.4 308.1L375.6 304.4L380.2 306.5L375.6 309.6Z" fill="#787878"/>
<path d="M374.1 320.4L380.2 317.3L381.8 321.0L375.6 322.9Z" fill="#007d00"/>
<path d="M386.4 311.2L392.6 305.6L406.5 306.5L408.0 314.3L401.9 322.0L392.6 322.9L395.7 315.8L388.0 314.3Z" fill="#007d00"/>
<path d="M387.0 310.6L390.1 308.7L390.1 312.7Z" fill="#1e46e6"/>
<path d="M392.6 320.4L398.8 315.8L403.4 317.3L398.8 322.0Z" fill="#1e46e6"/>
<path d="M392.6 306.5L398.8 305.6L398.8 308.1L392.6 308.7Z" fill="#787878"/>
<path d="M516.0 240.2L522.2 227.8L537.7 223.2L551.5 218.6L565.4 227.8L577.8 237.1L590.1 232.5L600.0 230.9L600.0 295.7L577.8 292.7L562.3 289.6L543.8 284.9L528.4 281.9L520.7 277.2L520.7 268.0L526.9 260.2L516.0 252.5Z" fill="#007d00"/>
<path d="M517.6 240.2L522.2 230.9L534.6 227.8L550.0 221.7L557.7 230.9L562.3 243.3L571.6 252.5L584.0 264.9L600.0 268.0L600.0 283.4L577.8 283.4L565.4 277.2L546.9 274.1L534.6 268.0L528.4 261.8L522.2 252.5Z" fill="#1e46e6"/>
<path d="M528.4 240.2L543.8 234.0L556.2 237.1L565.4 252.5L577.8 268.0L571.6 277.2L553.1 271.0L540.7 264.9Z" fill="#0b82de"/>
<path d="M565.4 255.6L577.8 252.5L585.5 258.7L600.0 252.5L600.0 295.7L577.8 286.5L571.6 271.0Z" fill="#6a0dc8"/>
<path d="M574.7 274.1L580.9 268.0L585.5 271.0L577.8 280.3Z" fill="#c90c85"/>
<path d="M580.9 240.2L600.0 234.0L600.0 252.5L585.5 257.2Z" fill="#007d00"/>
<path d="M585.5 240.2L596.3 237.1L596.3 241.7L587.0 243.9Z" fill="#787878"/>
<path d="M361.7 355.0L371.0 345.1L392.6 340.5L418.8 334.3L423.5 320.4L435.8 306.5L437.3 297.3L451.2 298.8L468.2 294.2L472.8 301.9L485.2 308.1L500.6 301.9L516.0 291.1L534.6 284.9L562.3 289.6L600.0 295.7L600.0 355.0Z" fill="#007d00"/>
<path d="M448.1 332.8L460.5 323.5L468.2 317.3L472.8 323.5L463.6 332.8L454.3 337.4Z" fill="#000000"/>
<path d="M435.8 298.8L445.1 297.3L443.5 301.9L435.8 303.5Z" fill="#787878"/>
<path d="M465.1 295.7L471.3 295.1L471.3 301.9L466.7 301.9Z" fill="#787878"/>
<path d="M420.4 326.6L429.6 314.3L445.1 305.0L463.6 301.9L466.7 311.2L454.3 317.3L445.1 326.6L432.7 332.8L423.5 334.3Z" fill="#1e46e6"/>
<path d="M429.6 320.4L442.0 311.2L454.3 306.5L460.5 309.6L448.1 317.3L435.8 326.6Z" fill="#0b82de"/>
<path d="M371.0 355.0L380.2 345.1L401.9 342.0L423.5 337.4L445.1 334.3L448.1 342.0L432.7 348.2L417.3 355.0Z" fill="#1e46e6"/>
<path d="M389.5 346.7L404.9 343.6L417.3 342.0L411.1 348.2L395.7 351.3Z" fill="#0b82de"/>
<path d="M392.6 355.0L401.9 348.2L423.5 343.6L435.8 342.0L429.6 349.8L417.3 355.0Z" fill="#6a0dc8"/>
<path d="M404.9 355.0L411.1 349.8L423.5 346.7L420.4 355.0Z" fill="#c90c85"/>
<path d="M472.8 355.0L482.1 332.8L485.2 314.3L497.5 305.0L516.0 292.7L534.6 286.5L562.3 291.1L600.0 298.8L600.0 355.0Z" fill="#1e46e6"/>
<path d="M451.2 334.3L466.7 332.8L466.7 340.5L454.3 340.5Z" fill="#787878"/>
<path d="M485.2 332.8L491.4 311.2L509.9 298.8L525.3 295.7L546.9 298.8L562.3 301.9L571.6 295.7L600.0 301.9L600.0 355.0L479.0 355.0Z" fill="#0b82de"/>
<path d="M488.3 332.8L497.5 311.2L509.9 301.9L525.3 301.9L543.8 311.2L556.2 301.9L568.5 298.8L577.8 301.9L600.0 305.0L600.0 355.0L482.1 355.0Z" fill="#6a0dc8"/>
<path d="M492.9 355.0L497.5 326.6L503.7 308.1L516.0 301.9L525.3 311.2L537.7 323.5L550.0 339.0L556.2 355.0Z" fill="#c90c85"/>
<path d="M509.9 355.0L513.0 323.5L516.0 311.2L525.3 317.3L534.6 329.7L543.8 345.1L546.9 355.0Z" fill="#c06487"/>
<path d="M523.8 339.0L528.4 326.6L533.0 332.8L531.5 345.1L526.9 346.7Z" fill="#d2883b"/>
<path d="M526.9 337.4L529.0 334.3L529.9 338.3L527.8 339.6Z" fill="#fac431"/>
<path d="M562.3 301.9L577.8 295.7L600.0 292.7L600.0 305.0L577.8 308.1L565.4 311.2Z" fill="#c90c85"/>
<path d="M577.8 355.0L584.0 332.8L600.0 326.6L600.0 355.0Z" fill="#0b82de"/>
<path d="M590.1 320.4L600.0 314.3L600.0 332.8L593.2 332.8Z" fill="#007d00"/>
</g>
<g clip-path="url(#t5)">
<path d="M400.0 205.0L600.0 205.0L600.0 355.0L400.0 355.0Z" fill="#000000"/>
<path d="M410.7 241.9L418.4 224.4L429.1 223.4L441.7 228.3L443.6 245.7L434.9 250.6L421.3 252.5L412.6 246.7Z" fill="#007d00"/>
<path d="M410.1 239.9L413.6 230.2L421.3 227.3L427.2 232.2L438.8 236.0L441.7 243.8L429.1 248.6L419.4 243.8L412.6 243.8Z" fill="#1e46e6"/>
<path d="M412.6 238.9L415.5 231.2L421.3 229.2L424.2 234.1L419.4 240.9Z" fill="#0b82de"/>
<path d="M427.2 238.0L436.9 237.0L439.8 242.8L431.0 246.7Z" fill="#0b82de"/>
<path d="M451.4 238.0L456.8 238.0L456.8 243.8L451.4 243.8Z" fill="#007d00"/>
<path d="M414.5 254.5L425.2 254.5L425.2 257.0L414.5 257.0Z" fill="#787878"/>
<path d="M516.4 241.9L520.3 230.2L531.9 225.4L543.5 223.4L551.3 219.0L561.0 223.4L566.8 230.2L574.6 238.0L582.3 238.9L589.1 233.1L600.0 230.2L600.0 286.5L574.6 290.4L566.8 290.4L555.2 286.5L539.7 282.6L526.1 280.7L520.3 276.8L521.2 271.0L525.1 265.1L520.3 253.5Z" fill="#007d00"/>
<path d="M516.4 239.9L521.2 231.2L531.9 228.3L545.5 224.4L553.2 220.5L555.2 228.3L564.9 236.0L568.8 247.7L576.5 255.4L584.3 261.3L600.0 259.3L600.0 286.5L580.4 282.6L570.7 282.6L564.9 274.8L555.2 271.9L547.4 278.7L535.8 276.8L528.0 271.0L524.2 263.2L521.2 251.6Z" fill="#1e46e6"/>
<path d="M524.2 245.7L530.0 236.0L539.7 232.2L549.4 230.2L553.2 238.0L561.0 243.8L564.9 253.5L570.7 263.2L568.8 271.0L559.1 269.0L547.4 272.9L535.8 269.0L528.0 261.3Z" fill="#0b82de"/>
<path d="M524.2 236.0L529.0 234.1L529.6 238.9L525.1 239.9Z" fill="#6a0dc8"/>
<path d="M551.3 239.9L559.1 241.9L560.0 246.7L553.2 245.7Z" fill="#6a0dc8"/>
<path d="M568.8 261.3L574.6 259.3L576.5 269.0L570.7 271.9Z" fill="#6a0dc8"/>
<path d="M573.6 273.9L579.4 270.0L585.3 271.9L580.4 279.7L575.6 279.7Z" fill="#c90c85"/>
<path d="M553.2 274.8L561.0 271.0L566.8 273.9L565.9 281.6L555.2 282.6Z" fill="#007d00"/>
<path d="M559.1 278.7L566.8 279.7L566.8 282.6L559.1 281.6Z" fill="#000000"/>
<path d="M584.3 239.9L592.0 238.9L592.0 241.9L585.3 242.8Z" fill="#787878"/>
<path d="M586.2 263.2L600.0 261.3L600.0 269.0L588.2 271.0Z" fill="#0b82de"/>
<path d="M400.0 307.8L405.8 308.8L407.8 315.6L403.9 321.4L400.0 322.4Z" fill="#007d00"/>
<path d="M400.0 316.5L402.9 316.0L402.9 319.5L400.0 319.8Z" fill="#1e46e6"/>
<path d="M419.4 323.3L427.2 313.6L435.9 305.9L437.8 298.1L447.5 296.2L458.2 300.1L466.0 297.1L469.8 295.2L472.7 300.1L476.6 305.9L481.5 307.8L487.3 303.9L497.0 300.1L508.6 294.2L520.3 287.4L535.8 284.5L555.2 287.4L566.8 290.4L600.0 286.5L600.0 355.0L400.0 355.0L400.0 336.9L411.6 335.0L421.3 329.2Z" fill="#007d00"/>
<path d="M452.4 325.3L464.0 316.5L473.7 319.5L477.6 329.2L476.6 336.9L466.0 333.0L458.2 336.9L451.4 335.0Z" fill="#000000"/>
<path d="M451.4 335.0L467.9 333.0L467.9 340.8L454.3 341.8Z" fill="#787878"/>
<path d="M466.0 295.2L471.8 294.6L472.2 301.0L466.9 300.1Z" fill="#787878"/>
<path d="M474.7 304.9L480.5 305.9L480.5 308.8L475.3 308.2Z" fill="#787878"/>
<path d="M420.4 324.3L429.1 315.6L438.8 309.8L450.4 304.9L464.0 303.0L471.8 307.8L466.0 313.6L456.3 317.5L448.5 325.3L438.8 329.2L425.2 329.2Z" fill="#1e46e6"/>
<path d="M429.1 319.5L438.8 313.6L450.4 308.8L462.1 306.8L464.0 310.7L454.3 314.6L444.6 321.4L434.9 325.3Z" fill="#0b82de"/>
<path d="M425.2 326.2L431.0 321.4L438.8 321.4L440.7 326.2L431.0 329.2Z" fill="#6a0dc8"/>
<path d="M400.0 340.8L411.6 338.9L423.3 336.9L438.8 338.9L446.6 340.8L444.6 348.5L438.8 355.0L400.0 355.0Z" fill="#1e46e6"/>
<path d="M403.9 344.7L415.5 340.8L429.1 340.8L436.9 344.7L429.1 350.5L411.6 350.5Z" fill="#0b82de"/>
<path d="M400.0 348.5L409.7 346.6L423.3 347.6L431.0 350.5L427.2 355.0L400.0 355.0Z" fill="#6a0dc8"/>
<path d="M411.6 355.0L415.5 351.5L425.2 351.5L423.3 355.0Z" fill="#c90c85"/>
<path d="M444.6 344.7L450.4 343.7L450.4 348.5L445.6 349.5Z" fill="#787878"/>
<path d="M477.6 321.4L483.4 311.7L491.2 305.9L500.9 301.0L512.5 295.2L524.2 290.4L539.7 288.4L555.2 291.3L568.8 292.3L600.0 288.4L600.0 355.0L450.4 355.0L458.2 348.5L471.8 340.8L477.6 336.9L479.5 329.2Z" fill="#1e46e6"/>
<path d="M481.5 329.2L487.3 317.5L497.0 309.8L508.6 302.0L520.3 297.1L535.8 296.2L547.4 298.1L555.2 296.2L566.8 300.1L561.0 309.8L555.2 321.4L561.0 333.0L568.8 344.7L570.7 355.0L464.0 355.0L469.8 348.5L477.6 340.8Z" fill="#0b82de"/>
<path d="M466.0 355.0L471.8 346.6L481.5 340.8L487.3 329.2L491.2 319.5L497.0 311.7L508.6 303.9L520.3 302.0L531.9 309.8L539.7 321.4L547.4 333.0L555.2 344.7L561.0 355.0Z" fill="#6a0dc8"/>
<path d="M500.9 313.6L508.6 307.8L520.3 305.9L530.0 313.6L537.7 325.3L543.5 336.9L551.3 348.5L553.2 355.0L508.6 355.0L506.7 340.8L502.8 329.2L497.0 321.4Z" fill="#c90c85"/>
<path d="M508.6 321.4L511.5 313.6L518.3 315.6L526.1 323.3L533.9 329.2L535.8 340.8L539.7 348.5L535.8 355.0L514.5 355.0L512.5 340.8Z" fill="#c06487"/>
<path d="M520.3 336.9L524.2 327.2L531.9 325.3L533.9 333.0L530.0 340.8L533.9 348.5L530.0 350.5L524.2 344.7Z" fill="#d2883b"/>
<path d="M524.2 337.9L527.1 335.0L529.0 337.9L526.1 339.8Z" fill="#fac431"/>
<path d="M553.2 302.0L564.9 296.2L586.2 288.4L595.9 294.2L586.2 302.0L570.7 309.8L559.1 309.8Z" fill="#6a0dc8"/>
<path d="M555.2 303.9L564.9 298.1L574.6 294.2L586.2 290.4L592.0 296.2L582.3 300.1L572.6 305.9L562.9 307.8Z" fill="#c90c85"/>
<path d="M564.9 313.6L574.6 309.8L582.3 321.4L580.4 340.8L574.6 355.0L568.8 355.0L562.9 336.9L559.1 321.4Z" fill="#1e46e6"/>
<path d="M582.3 321.4L590.1 309.8L600.0 305.9L600.0 355.0L580.4 355.0L579.4 336.9Z" fill="#007d00"/>
<path d="M591.1 327.2L595.9 325.3L597.9 340.8L594.0 352.4L591.1 348.5Z" fill="#787878"/>
<path d="M594.0 313.6L600.0 311.7L600.0 325.3L595.0 325.3Z" fill="#005a00"/>
</g>
<g clip-path="url(#t6)">
<path d="M300.0 355.0L500.0 355.0L500.0 505.0L300.0 505.0Z" fill="#007d00"/>
<path d="M300.0 355.0L340.7 355.0L331.0 364.7L327.2 384.1L336.9 393.8L350.4 398.6L360.1 399.6L358.2 405.4L350.4 413.2L345.6 419.0L344.6 432.6L341.7 440.4L342.7 455.9L334.9 452.0L325.2 455.9L311.6 452.0L300.0 455.9Z" fill="#000000"/>
<path d="M325.2 463.6L331.0 459.8L342.7 457.8L354.3 465.6L364.0 471.4L377.6 473.3L389.2 471.4L391.2 479.2L388.3 488.9L377.6 486.9L364.0 488.9L356.3 486.9L350.4 490.8L334.9 488.9L327.2 479.2Z" fill="#000000"/>
<path d="M407.7 383.1L414.5 383.1L414.5 395.7L408.6 396.7Z" fill="#000000"/>
<path d="M395.1 405.4L404.8 407.4L405.7 413.2L397.0 413.2Z" fill="#000000"/>
<path d="M482.3 490.8L500.0 488.9L500.0 505.0L486.2 505.0Z" fill="#000000"/>
<path d="M328.1 386.0L332.0 368.6L340.7 357.9L346.6 355.0L400.9 355.0L397.0 364.7L391.2 370.5L383.4 376.3L379.5 389.9L366.0 396.7L352.4 396.7L338.8 392.8Z" fill="#1e46e6"/>
<path d="M338.8 378.3L344.6 366.6L358.2 360.8L377.6 358.9L387.3 362.8L385.4 372.5L377.6 384.1L366.0 391.9L352.4 392.8L342.7 388.0Z" fill="#0b82de"/>
<path d="M346.6 376.3L350.4 368.6L364.0 364.7L377.6 363.7L381.5 368.6L375.7 378.3L364.0 386.0L354.3 386.0Z" fill="#6a0dc8"/>
<path d="M348.5 376.3L351.4 369.5L364.0 366.6L376.6 365.7L377.6 370.5L371.8 378.3L362.1 384.1L354.3 384.1Z" fill="#c90c85"/>
<path d="M351.4 374.4L354.3 369.5L364.0 368.6L367.9 372.5L362.1 378.3L356.3 379.2Z" fill="#c06487"/>
<path d="M351.4 373.4L355.3 370.5L358.2 371.5L354.3 374.4Z" fill="#fac431"/>
<path d="M329.1 386.0L333.0 382.2L338.8 384.1L338.8 389.9L332.0 390.9Z" fill="#6a0dc8"/>
<path d="M330.1 386.0L333.9 383.5L337.8 386.0L334.9 389.9Z" fill="#c90c85"/>
<path d="M360.1 355.0L393.1 355.0L389.2 359.8L373.7 360.8L364.0 358.9Z" fill="#c90c85"/>
<path d="M367.9 355.0L387.3 355.0L383.4 357.9L371.8 358.5Z" fill="#c06487"/>
<path d="M404.8 380.2L408.6 366.6L416.4 358.9L424.2 355.0L500.0 355.0L500.0 442.3L490.1 446.2L482.3 440.4L474.6 432.6L468.8 422.9L464.9 413.2L455.2 417.1L445.5 413.2L435.8 413.2L424.2 409.3L416.4 397.7L415.4 384.1Z" fill="#1e46e6"/>
<path d="M451.3 374.4L461.0 370.5L474.6 372.5L486.2 380.2L500.0 382.2L500.0 409.3L486.2 405.4L474.6 409.3L466.8 405.4L455.2 409.3L447.4 401.6L449.4 386.0Z" fill="#0b82de"/>
<path d="M455.2 389.9L461.0 388.0L462.9 393.8L457.1 394.8Z" fill="#007d00"/>
<path d="M474.6 393.8L482.3 392.8L482.3 399.6L475.6 399.6Z" fill="#007d00"/>
<path d="M405.7 376.3L412.5 364.7L424.2 358.9L447.4 356.9L449.4 366.6L447.4 380.2L449.4 393.8L445.5 411.3L435.8 412.2L425.1 407.4L418.3 393.8L416.4 380.2Z" fill="#6a0dc8"/>
<path d="M406.7 374.4L414.5 365.7L426.1 362.8L443.5 359.8L447.4 366.6L446.5 380.2L447.4 391.9L443.5 407.4L435.8 409.3L426.1 405.4L421.2 391.9L419.3 380.2Z" fill="#c90c85"/>
<path d="M406.7 373.4L416.4 367.6L431.9 364.7L443.5 366.6L445.5 376.3L443.5 389.9L435.8 392.8L424.2 389.9L420.3 380.2L412.5 378.3Z" fill="#c06487"/>
<path d="M414.5 372.5L420.3 371.5L421.2 374.4L415.4 375.4Z" fill="#d2883b"/>
<path d="M426.1 384.1L435.8 381.2L439.7 386.0L431.9 388.9Z" fill="#d2883b"/>
<path d="M428.0 397.7L435.8 395.7L439.7 401.6L433.9 405.4L429.0 403.5Z" fill="#c06487"/>
<path d="M451.3 355.0L500.0 355.0L500.0 372.5L486.2 376.3L470.7 372.5L459.1 368.6L453.2 362.8Z" fill="#6a0dc8"/>
<path d="M455.2 355.0L500.0 355.0L500.0 368.6L484.3 372.5L470.7 368.6L461.0 364.7Z" fill="#c90c85"/>
<path d="M461.0 355.0L494.0 355.0L490.1 364.7L474.6 366.6L464.9 362.8Z" fill="#c06487"/>
<path d="M464.9 361.8L474.6 360.8L475.6 364.7L466.8 365.7Z" fill="#d2883b"/>
<path d="M468.8 421.0L474.6 413.2L486.2 409.3L500.0 405.4L500.0 442.3L490.1 444.2L480.4 436.5L472.6 430.7Z" fill="#6a0dc8"/>
<path d="M470.7 421.0L476.5 415.1L488.2 412.2L500.0 409.3L500.0 438.4L490.1 438.4L480.4 432.6Z" fill="#c90c85"/>
<path d="M472.6 421.0L480.4 417.1L494.0 415.1L500.0 417.1L500.0 432.6L486.2 431.6L478.5 427.7Z" fill="#c06487"/>
<path d="M478.5 422.9L486.2 421.0L489.1 424.8L481.4 426.8Z" fill="#d2883b"/>
<path d="M478.5 455.9L488.2 450.1L500.0 446.2L500.0 475.3L492.0 471.4L484.3 465.6Z" fill="#6a0dc8"/>
<path d="M486.2 455.9L494.0 452.0L500.0 452.0L500.0 469.5L494.0 467.5Z" fill="#c90c85"/>
<path d="M345.6 432.6L346.6 422.9L356.3 417.1L373.7 416.1L391.2 417.1L400.9 421.0L408.6 428.7L416.4 440.4L424.2 452.0L433.9 463.6L441.6 475.3L447.4 488.9L451.3 505.0L408.6 505.0L404.8 494.7L393.1 488.9L391.2 479.2L385.4 471.4L377.6 463.6L366.0 457.8L354.3 452.0L346.6 442.3Z" fill="#1e46e6"/>
<path d="M358.2 424.8L373.7 420.0L389.2 421.0L400.9 426.8L408.6 436.5L416.4 448.1L426.1 461.7L435.8 475.3L443.5 490.8L445.5 505.0L416.4 505.0L414.5 490.8L404.8 481.1L397.0 471.4L385.4 459.8L373.7 452.0L362.1 444.2L356.3 434.5Z" fill="#0b82de"/>
<path d="M400.9 452.0L408.6 455.9L416.4 463.6L412.5 467.5L404.8 461.7Z" fill="#6a0dc8"/>
<path d="M416.4 471.4L426.1 479.2L435.8 490.8L431.9 494.7L422.2 486.9Z" fill="#6a0dc8"/>
<path d="M428.0 498.5L435.8 496.6L437.7 505.0L430.0 505.0Z" fill="#6a0dc8"/>
<path d="M352.4 436.5L358.2 434.5L358.2 440.4L353.3 441.3Z" fill="#007d00"/>
<path d="M435.8 428.7L443.5 426.8L455.2 436.5L464.9 450.1L470.7 459.8L464.9 463.6L455.2 452.0L445.5 440.4Z" fill="#1e46e6"/>
<path d="M451.3 463.6L459.1 467.5L466.8 479.2L461.0 483.0L453.2 473.3Z" fill="#1e46e6"/>
<path d="M439.7 430.7L444.5 429.7L455.2 440.4L451.3 442.3Z" fill="#0b82de"/>
<path d="M416.4 424.8L424.2 421.0L428.0 424.8L424.2 430.7L418.3 429.7Z" fill="#787878"/>
<path d="M431.9 417.1L447.4 417.1L447.4 421.9L431.9 421.9Z" fill="#787878"/>
<path d="M424.2 436.5L431.9 438.4L433.9 446.2L426.1 444.2Z" fill="#787878"/>
<path d="M461.0 428.7L468.8 430.7L468.8 438.4L462.0 436.5Z" fill="#787878"/>
<path d="M433.9 448.1L443.5 452.0L443.5 455.9L435.8 453.9Z" fill="#787878"/>
<path d="M377.6 403.5L385.4 402.5L393.1 409.3L400.9 413.2L397.0 415.1L385.4 409.3Z" fill="#787878"/>
<path d="M408.6 401.6L416.4 401.6L416.4 407.4L408.6 407.4Z" fill="#787878"/>
<path d="M358.2 400.6L364.0 399.6L364.0 403.5L358.2 404.5Z" fill="#787878"/>
<path d="M468.8 469.5L480.4 471.4L484.3 479.2L474.6 481.1Z" fill="#343434"/>
<path d="M464.9 432.6L468.8 432.6L468.8 437.4L464.9 437.4Z" fill="#343434"/>
<path d="M451.3 490.8L464.9 481.1L474.6 485.0L480.4 490.8L478.5 505.0L453.2 505.0Z" fill="#1e46e6"/>
<path d="M455.2 494.7L466.8 488.9L474.6 494.7L470.7 505.0L457.1 505.0Z" fill="#0b82de"/>
<path d="M300.0 455.9L311.6 452.0L325.2 455.9L327.2 471.4L325.2 481.1L311.6 483.0L300.0 479.2Z" fill="#787878"/>
<path d="M305.8 457.8L317.5 455.9L323.3 463.6L315.5 471.4L307.8 467.5Z" fill="#007d00"/>
<path d="M304.8 455.9L307.8 454.9L308.1 457.8L305.4 458.8Z" fill="#1e46e6"/>
<path d="M307.8 469.5L319.4 471.4L321.3 479.2L309.7 479.2Z" fill="#000000"/>
<path d="M300.0 483.0L325.2 481.1L334.9 488.9L350.4 490.8L356.3 486.9L364.0 488.9L377.6 486.9L388.3 488.9L408.6 505.0L300.0 505.0Z" fill="#007d00"/>
<path d="M300.0 483.0L307.8 483.0L309.7 490.8L300.0 492.7Z" fill="#787878"/>
<path d="M325.2 488.9L334.9 490.8L333.0 498.5L325.2 496.6Z" fill="#787878"/>
<path d="M342.7 488.9L348.5 488.9L348.5 492.7L342.7 492.7Z" fill="#787878"/>
<path d="M354.3 479.2L360.1 479.2L360.1 483.0L354.3 483.0Z" fill="#787878"/>
<path d="M389.2 479.2L397.0 481.1L397.0 490.8L391.2 488.9Z" fill="#787878"/>
<path d="M346.6 505.0L350.4 494.7L362.1 490.8L377.6 490.8L385.4 494.7L391.2 505.0Z" fill="#1e46e6"/>
<path d="M354.3 500.5L362.1 494.7L375.7 494.7L377.6 500.5L373.7 505.0L356.3 505.0Z" fill="#0b82de"/>
<path d="M348.5 505.0L350.4 499.5L358.2 497.6L366.0 499.5L364.0 505.0Z" fill="#6a0dc8"/>
<path d="M351.4 505.0L353.3 500.5L358.2 499.5L362.1 502.4L360.1 505.0Z" fill="#c90c85"/>
<path d="M301.0 425.8L306.8 427.7L302.9 432.6Z" fill="#787878"/>
<path d="M300.0 422.9L301.9 421.9L301.9 425.8L300.0 425.8Z" fill="#007d00"/>
<path d="M345.6 417.1L352.4 415.1L353.3 420.0L346.6 421.9Z" fill="#787878"/>
<path d="M341.7 440.4L345.6 441.3L345.6 455.9L342.7 455.9Z" fill="#787878"/>
</g>
<g clip-path="url(#t7)">
<path d="M500.0 355.0L700.0 355.0L700.0 505.0L500.0 505.0Z" fill="#6a0dc8"/>
<path d="M500.0 362.8L511.6 355.0L564.0 355.0L558.2 366.6L548.5 378.3L534.9 386.0L519.4 382.2L507.8 376.3L500.0 378.3Z" fill="#c90c85"/>
<path d="M500.0 405.4L511.6 413.2L529.1 421.0L548.5 432.6L564.0 428.7L581.5 432.6L589.2 448.1L577.6 455.9L562.1 463.6L558.2 479.2L538.8 490.8L519.4 494.7L500.0 494.7Z" fill="#c90c85"/>
<path d="M585.4 388.0L600.9 386.0L620.3 388.0L631.9 393.8L633.9 407.4L624.2 419.0L608.6 421.0L597.0 413.2L589.2 401.6Z" fill="#c90c85"/>
<path d="M635.8 413.2L647.4 405.4L664.9 403.5L682.3 407.4L700.0 405.4L700.0 436.5L686.2 440.4L670.7 436.5L655.2 432.6L643.5 426.8Z" fill="#c90c85"/>
<path d="M608.6 471.4L620.3 459.8L635.8 455.9L655.2 459.8L674.6 455.9L700.0 452.0L700.0 505.0L612.5 505.0L614.5 486.9Z" fill="#c90c85"/>
<path d="M575.7 374.4L585.4 370.5L591.2 376.3L585.4 384.1L577.6 384.1Z" fill="#c90c85"/>
<path d="M639.7 366.6L647.4 358.9L659.1 355.0L674.6 355.0L670.7 366.6L659.1 376.3L647.4 376.3Z" fill="#c90c85"/>
<path d="M670.7 388.0L682.3 389.9L694.0 399.6L692.0 407.4L680.4 403.5Z" fill="#c90c85"/>
<path d="M503.9 355.0L523.3 355.0L519.4 360.8L507.8 362.8Z" fill="#c06487"/>
<path d="M533.0 356.9L548.5 358.9L546.6 366.6L534.9 364.7Z" fill="#c06487"/>
<path d="M500.0 428.7L507.8 424.8L523.3 426.8L531.0 436.5L527.2 448.1L515.5 452.0L500.0 446.2Z" fill="#c06487"/>
<path d="M546.6 440.4L558.2 434.5L573.7 436.5L585.4 450.1L573.7 455.9L558.2 452.0Z" fill="#c06487"/>
<path d="M519.4 463.6L538.8 455.9L554.3 459.8L554.3 471.4L538.8 479.2L523.3 475.3Z" fill="#c06487"/>
<path d="M507.8 467.5L519.4 471.4L527.2 483.0L515.5 486.9L505.8 479.2Z" fill="#c06487"/>
<path d="M593.1 393.8L604.8 389.9L624.2 391.9L628.0 401.6L620.3 411.3L612.5 405.4L600.9 403.5Z" fill="#c06487"/>
<path d="M643.5 415.1L655.2 411.3L674.6 413.2L682.3 419.0L670.7 426.8L655.2 428.7Z" fill="#c06487"/>
<path d="M635.8 479.2L655.2 471.4L674.6 467.5L686.2 471.4L674.6 483.0L655.2 490.8L647.4 505.0L631.9 505.0Z" fill="#c06487"/>
<path d="M670.7 389.9L680.4 391.9L692.0 401.6L690.1 405.4L678.5 401.6Z" fill="#c06487"/>
<path d="M674.6 475.3L686.2 473.3L686.2 486.9L676.5 486.9Z" fill="#c06487"/>
<path d="M500.0 432.6L511.6 430.7L523.3 440.4L519.4 448.1L507.8 446.2L500.0 440.4Z" fill="#d2883b"/>
<path d="M515.5 428.7L523.3 427.7L525.2 434.5L518.4 435.5Z" fill="#d2883b"/>
<path d="M550.4 444.2L562.1 440.4L573.7 446.2L571.8 452.0L558.2 451.0Z" fill="#d2883b"/>
<path d="M533.0 459.8L546.6 460.7L548.5 469.5L536.9 467.5Z" fill="#d2883b"/>
<path d="M509.7 469.5L519.4 473.3L521.3 479.2L511.6 476.2Z" fill="#d2883b"/>
<path d="M598.9 394.8L620.3 394.8L622.2 401.6L616.4 407.4L600.9 401.6Z" fill="#d2883b"/>
<path d="M653.2 416.1L666.8 414.2L678.5 417.1L666.8 421.9L655.2 421.0Z" fill="#d2883b"/>
<path d="M504.8 437.4L508.7 436.5L518.4 446.2L515.5 448.1Z" fill="#fac431"/>
<path d="M564.0 443.3L567.9 442.3L571.8 452.0L567.9 453.0Z" fill="#fac431"/>
<path d="M601.8 395.7L617.4 395.7L617.4 400.0L601.8 400.0Z" fill="#fac431"/>
<path d="M656.2 417.5L660.0 417.1L660.2 419.4L656.4 419.8Z" fill="#fac431"/>
<path d="M525.2 391.9L538.8 388.0L550.4 389.9L546.6 397.7L533.0 399.6Z" fill="#0b82de"/>
<path d="M507.8 409.3L523.3 413.2L521.3 419.0L509.7 417.1Z" fill="#0b82de"/>
<path d="M566.0 380.2L573.7 378.3L577.6 386.0L585.4 393.8L593.1 405.4L585.4 413.2L577.6 405.4L567.9 393.8Z" fill="#0b82de"/>
<path d="M608.6 366.6L624.2 362.8L635.8 370.5L639.7 380.2L628.0 384.1L616.4 378.3Z" fill="#0b82de"/>
<path d="M635.8 388.0L647.4 386.0L655.2 393.8L649.4 401.6L639.7 399.6Z" fill="#0b82de"/>
<path d="M620.3 426.8L635.8 430.7L647.4 440.4L655.2 455.9L643.5 459.8L631.9 448.1L624.2 438.4Z" fill="#0b82de"/>
<path d="M686.2 426.8L700.0 424.8L700.0 448.1L690.1 446.2Z" fill="#0b82de"/>
<path d="M548.5 483.0L562.1 471.4L573.7 467.5L577.6 479.2L566.0 494.7L550.4 498.5Z" fill="#0b82de"/>
<path d="M600.9 436.5L612.5 440.4L610.6 452.0L602.8 448.1Z" fill="#0b82de"/>
<path d="M534.9 417.1L546.6 419.0L544.6 424.8L535.9 423.9Z" fill="#0b82de"/>
<path d="M659.1 378.3L674.6 376.3L678.5 384.1L664.9 386.0Z" fill="#0b82de"/>
<path d="M604.8 479.2L616.4 483.0L616.4 498.5L606.7 494.7Z" fill="#0b82de"/>
<path d="M573.7 355.0L604.8 355.0L600.9 360.8L591.2 358.9L579.5 362.8Z" fill="#007d00"/>
<path d="M546.6 399.6L558.2 388.0L567.9 378.3L577.6 372.5L577.6 382.2L573.7 393.8L564.0 401.6L564.0 413.2L554.3 421.0L542.7 421.0L538.8 413.2Z" fill="#007d00"/>
<path d="M581.5 422.9L593.1 421.0L597.0 428.7L589.2 432.6L581.5 430.7Z" fill="#007d00"/>
<path d="M500.0 389.9L505.8 391.9L505.8 399.6L500.0 401.6Z" fill="#007d00"/>
<path d="M567.9 479.2L573.7 467.5L585.4 459.8L597.0 448.1L608.6 440.4L610.6 452.0L606.7 471.4L604.8 486.9L593.1 490.8L589.2 498.5L577.6 494.7L569.8 488.9Z" fill="#007d00"/>
<path d="M668.8 355.0L700.0 355.0L700.0 380.2L690.1 372.5L686.2 364.7L674.6 360.8Z" fill="#007d00"/>
<path d="M635.8 422.9L640.6 421.9L641.2 427.7L636.8 428.3Z" fill="#007d00"/>
<path d="M542.7 417.1L548.5 409.3L556.3 399.6L562.1 405.4L563.0 415.1L552.4 421.0L550.4 428.7L546.6 422.9Z" fill="#787878"/>
<path d="M550.4 413.2L558.2 407.4L560.1 413.2L553.3 418.0Z" fill="#343434"/>
<path d="M571.8 471.4L577.6 469.5L581.5 479.2L585.4 475.3L597.0 459.8L598.9 467.5L587.3 481.1L577.6 488.9L572.7 483.0Z" fill="#787878"/>
<path d="M593.1 463.6L598.9 458.8L604.8 461.7L602.8 471.4L593.1 475.3L585.4 477.2L583.4 473.3Z" fill="#000000"/>
<path d="M573.7 483.0L579.5 483.0L583.4 492.7L577.6 492.7Z" fill="#000000"/>
<path d="M692.0 358.9L700.0 358.9L700.0 370.5L694.0 368.6Z" fill="#000000"/>
<path d="M589.2 355.0L595.1 355.0L595.1 358.9L590.2 358.9Z" fill="#787878"/>
</g>
<g clip-path="url(#t8)">
<path d="M700.0 355.0L900.0 355.0L900.0 505.0L700.0 505.0Z" fill="#6a0dc8"/>
<path d="M800.9 355.0L894.0 355.0L894.0 505.0L824.2 505.0L828.0 486.9L835.8 475.3L851.3 483.0L866.8 479.2L874.6 467.5L870.7 448.1L855.2 440.4L851.3 428.7L859.1 417.1L870.7 415.1L864.9 403.5L862.9 389.9L851.3 382.2L835.8 374.4L816.4 372.5L804.8 366.6Z" fill="#0b82de"/>
<path d="M868.8 432.6L878.5 428.7L884.3 432.6L880.4 442.3L872.6 440.4Z" fill="#6a0dc8"/>
<path d="M797.0 422.9L808.6 419.0L816.4 413.2L830.0 415.1L828.0 428.7L824.2 440.4L814.5 436.5L804.8 444.2L797.0 440.4Z" fill="#0b82de"/>
<path d="M700.0 388.0L711.6 389.9L723.3 405.4L725.2 419.0L731.0 428.7L746.6 436.5L758.2 444.2L766.0 455.9L764.0 471.4L754.3 479.2L746.6 471.4L738.8 459.8L727.2 455.9L711.6 446.2L700.0 438.4Z" fill="#0b82de"/>
<path d="M700.0 393.8L705.8 395.7L707.8 405.4L703.9 413.2L700.0 413.2Z" fill="#c90c85"/>
<path d="M700.0 401.6L703.9 402.5L702.9 407.4L700.0 407.4Z" fill="#c06487"/>
<path d="M752.4 486.9L764.0 479.2L769.8 488.9L758.2 494.7Z" fill="#0b82de"/>
<path d="M744.6 355.0L762.1 355.0L764.0 366.6L758.2 376.3L748.5 374.4Z" fill="#1e46e6"/>
<path d="M754.3 355.0L764.0 355.0L765.0 364.7L758.2 362.8Z" fill="#0b82de"/>
<path d="M700.0 355.0L746.6 355.0L748.5 374.4L742.7 382.2L738.8 391.9L731.0 393.8L733.0 409.3L734.9 422.9L725.2 430.7L719.4 428.7L719.4 413.2L711.6 393.8L700.0 384.1Z" fill="#007d00"/>
<path d="M723.3 355.0L745.6 355.0L746.6 374.4L741.7 384.1L733.0 390.9L725.2 384.1L719.4 374.4Z" fill="#000000"/>
<path d="M721.3 411.3L729.1 407.4L733.0 413.2L732.0 426.8L723.3 429.7L720.4 422.9Z" fill="#000000"/>
<path d="M729.1 417.1L733.0 417.1L733.0 426.8L729.1 426.8Z" fill="#787878"/>
<path d="M700.0 368.6L709.7 372.5L717.5 380.2L711.6 382.2L700.0 378.3Z" fill="#000000"/>
<path d="M705.8 438.4L711.6 434.5L723.3 440.4L738.8 446.2L740.7 459.8L734.9 463.6L723.3 453.9L709.7 448.1Z" fill="#007d00"/>
<path d="M707.8 421.0L715.5 417.1L719.4 422.9L711.6 428.7Z" fill="#007d00"/>
<path d="M734.9 401.6L746.6 393.8L758.2 386.0L773.7 374.4L781.5 362.8L789.2 366.6L793.1 382.2L804.8 389.9L808.6 413.2L797.0 417.1L785.4 413.2L777.6 419.0L764.0 422.9L754.3 432.6L742.7 428.7L738.8 415.1Z" fill="#c90c85"/>
<path d="M810.6 380.2L820.3 376.3L835.8 380.2L847.4 388.0L861.0 393.8L855.2 401.6L843.5 405.4L835.8 401.6L824.2 407.4L814.5 403.5Z" fill="#c90c85"/>
<path d="M781.5 459.8L791.2 452.0L808.6 448.1L816.4 455.9L816.4 479.2L808.6 486.9L797.0 479.2L785.4 475.3Z" fill="#c90c85"/>
<path d="M700.0 463.6L711.6 467.5L725.2 471.4L734.9 483.0L746.6 490.8L754.3 505.0L700.0 505.0Z" fill="#c90c85"/>
<path d="M771.8 483.0L781.5 481.1L787.3 490.8L781.5 498.5L773.7 494.7Z" fill="#c90c85"/>
<path d="M748.5 405.4L752.4 405.0L752.4 408.3L748.5 408.7Z" fill="#c06487"/>
<path d="M766.9 411.3L770.8 410.9L771.0 415.5L767.1 415.9Z" fill="#c06487"/>
<path d="M719.4 498.5L725.2 497.6L725.2 505.0L719.4 505.0Z" fill="#c06487"/>
<path d="M744.6 498.5L752.4 497.6L752.4 505.0L745.6 505.0Z" fill="#c06487"/>
<path d="M884.3 494.7L891.1 490.8L891.1 505.0L885.3 505.0Z" fill="#007d00"/>
</g>
<g clip-path="url(#t9)">
<path d="M300.0 505.0L500.0 505.0L500.0 655.0L300.0 655.0Z" fill="#0b82de"/>
<path d="M300.0 524.4L311.6 523.4L327.2 526.3L325.2 543.8L319.4 555.4L307.8 563.2L300.0 561.3Z" fill="#1e46e6"/>
<path d="M303.9 534.1L313.6 532.2L317.5 539.9L309.7 547.7L302.9 543.8Z" fill="#0b82de"/>
<path d="M307.8 549.6L319.4 545.7L321.3 553.5L311.6 559.3Z" fill="#6a0dc8"/>
<path d="M387.3 602.0L397.0 592.3L408.6 582.6L424.2 582.6L435.8 588.4L439.7 613.6L435.8 629.2L424.2 633.0L416.4 655.0L404.8 655.0L408.6 636.9L400.9 625.3L391.2 613.6Z" fill="#1e46e6"/>
<path d="M404.8 605.9L416.4 598.1L424.2 605.9L420.3 621.4L408.6 621.4Z" fill="#0b82de"/>
<path d="M373.7 516.6L385.4 508.9L400.9 505.0L416.4 505.0L408.6 516.6L397.0 524.4L381.5 526.3Z" fill="#1e46e6"/>
<path d="M358.2 551.6L373.7 547.7L389.2 555.4L397.0 569.0L389.2 582.6L377.6 590.4L373.7 605.9L364.0 613.6L354.3 605.9L358.2 586.5L360.1 571.0Z" fill="#6a0dc8"/>
<path d="M404.8 543.8L416.4 539.9L428.0 543.8L431.9 555.4L424.2 567.1L412.5 565.1L404.8 555.4Z" fill="#6a0dc8"/>
<path d="M416.4 590.4L426.1 588.4L430.0 596.2L420.3 600.1Z" fill="#6a0dc8"/>
<path d="M338.8 605.9L358.2 598.1L373.7 605.9L371.8 621.4L358.2 636.9L346.6 648.5L338.8 655.0L319.4 655.0L327.2 629.2Z" fill="#6a0dc8"/>
<path d="M300.0 567.1L311.6 563.2L321.3 551.6L319.4 539.9L327.2 524.4L331.0 512.8L338.8 505.0L364.0 505.0L377.6 516.6L385.4 528.3L393.1 536.0L397.0 547.7L385.4 551.6L373.7 547.7L366.0 563.2L362.1 582.6L354.3 598.1L350.4 613.6L342.7 629.2L334.9 640.8L323.3 655.0L300.0 655.0Z" fill="#c90c85"/>
<path d="M404.8 545.7L412.5 543.8L414.5 549.6L406.7 551.6Z" fill="#c90c85"/>
<path d="M416.4 559.3L424.2 558.3L425.1 563.2L417.4 564.2Z" fill="#c90c85"/>
<path d="M329.1 516.6L338.8 508.9L350.4 510.8L358.2 520.5L366.0 532.2L369.8 543.8L366.0 555.4L362.1 571.0L358.2 582.6L346.6 590.4L338.8 605.9L323.3 609.8L317.5 598.1L325.2 586.5L338.8 578.7L342.7 567.1L331.0 559.3L319.4 553.5L317.5 545.7L327.2 539.9Z" fill="#c06487"/>
<path d="M366.0 518.6L381.5 519.5L381.5 524.4L367.9 524.4Z" fill="#c06487"/>
<path d="M383.4 538.0L393.1 536.0L397.0 543.8L389.2 547.7Z" fill="#c06487"/>
<path d="M311.6 629.2L323.3 623.3L334.9 627.2L333.0 636.9L319.4 640.8L313.6 636.9Z" fill="#c06487"/>
<path d="M300.0 640.8L311.6 638.9L319.4 646.6L315.5 655.0L300.0 655.0Z" fill="#c06487"/>
<path d="M303.9 605.9L313.6 603.9L315.5 611.7L305.8 613.6Z" fill="#c06487"/>
<path d="M336.9 532.2L344.6 522.5L352.4 526.3L354.3 539.9L362.1 543.8L364.0 555.4L356.3 571.0L352.4 578.7L344.6 574.8L346.6 559.3L338.8 549.6Z" fill="#d2883b"/>
<path d="M318.4 547.7L327.2 543.8L333.0 551.6L325.2 555.4Z" fill="#d2883b"/>
<path d="M319.4 598.1L327.2 586.5L338.8 582.6L348.5 588.4L344.6 598.1L336.9 605.9L325.2 605.9Z" fill="#d2883b"/>
<path d="M385.4 538.0L391.2 537.0L393.1 541.9L387.3 542.8Z" fill="#d2883b"/>
<path d="M300.0 642.7L309.7 644.7L313.6 652.4L303.9 653.4Z" fill="#d2883b"/>
<path d="M319.4 629.2L325.2 628.2L326.2 634.0L320.4 635.0Z" fill="#d2883b"/>
<path d="M341.7 534.1L346.6 526.3L350.4 530.2L348.5 539.9L343.6 541.9Z" fill="#fac431"/>
<path d="M350.4 549.6L358.2 541.9L362.1 545.7L356.3 555.4L351.4 556.4Z" fill="#fac431"/>
<path d="M323.3 596.2L329.1 586.5L338.8 580.7L340.7 588.4L336.9 598.1L329.1 602.0Z" fill="#fac431"/>
<path d="M328.1 588.4L334.9 584.5L335.9 590.4L329.1 592.3Z" fill="#ffff00"/>
<path d="M414.5 609.8L420.3 611.7L420.3 617.5L415.4 616.5Z" fill="#007d00"/>
<path d="M433.9 574.8L443.5 561.3L453.2 541.9L464.9 522.5L474.6 505.0L500.0 505.0L500.0 512.8L484.3 512.8L470.7 524.4L459.1 543.8L449.4 563.2L439.7 582.6L439.7 613.6L437.7 629.2L435.8 655.0L416.4 655.0L422.2 638.9L431.9 629.2L435.8 613.6L426.1 584.5Z" fill="#007d00"/>
<path d="M455.2 543.8L466.8 524.4L482.3 508.9L490.1 510.8L474.6 528.3L464.9 547.7L466.8 567.1L468.8 586.5L462.9 605.9L455.2 621.4L447.4 636.9L445.5 655.0L435.8 655.0L437.7 629.2L439.7 613.6L437.7 582.6L449.4 563.2Z" fill="#787878"/>
<path d="M455.2 586.5L464.9 582.6L464.9 598.1L457.1 613.6L453.2 605.9Z" fill="#343434"/>
<path d="M461.0 543.8L468.8 528.3L482.3 516.6L500.0 510.8L500.0 655.0L439.7 655.0L443.5 629.2L455.2 613.6L462.9 602.0L466.8 582.6L462.9 563.2Z" fill="#000000"/>
<path d="M459.1 505.0L474.6 505.0L468.8 512.8L461.0 514.7Z" fill="#1e46e6"/>
<path d="M300.0 516.6L313.6 515.7L324.2 514.7L325.2 524.4L315.5 524.4L307.8 522.5L300.0 524.4Z" fill="#007d00"/>
<path d="M300.0 505.0L325.2 505.0L323.3 514.7L311.6 516.6L300.0 518.6Z" fill="#000000"/>
<path d="M315.5 521.5L324.2 520.5L324.2 524.4L316.5 524.8Z" fill="#787878"/>
</g>
<g clip-path="url(#t10)">
<path d="M500.0 505.0L700.0 505.0L700.0 655.0L500.0 655.0Z" fill="#6a0dc8"/>
<path d="M511.6 505.0L604.8 505.0L600.9 516.6L585.4 528.3L573.7 536.0L577.6 551.6L585.4 567.1L581.5 582.6L585.4 598.1L577.6 609.8L562.1 605.9L550.4 594.2L542.7 578.7L531.0 563.2L519.4 551.6L511.6 536.0L507.8 520.5Z" fill="#0b82de"/>
<path d="M573.7 609.8L585.4 613.6L597.0 625.3L600.9 640.8L593.1 655.0L581.5 655.0L577.6 636.9Z" fill="#0b82de"/>
<path d="M643.5 596.2L655.2 590.4L670.7 588.4L686.2 592.3L700.0 590.4L700.0 609.8L690.1 613.6L682.3 605.9L666.8 596.2L651.3 602.0Z" fill="#0b82de"/>
<path d="M682.3 625.3L694.0 621.4L700.0 623.3L700.0 644.7L688.2 638.9Z" fill="#0b82de"/>
<path d="M515.5 613.6L525.2 609.8L529.1 625.3L538.8 640.8L534.9 655.0L523.3 655.0L519.4 636.9Z" fill="#0b82de"/>
<path d="M523.3 528.3L538.8 524.4L554.3 530.2L558.2 543.8L550.4 559.3L546.6 574.8L554.3 586.5L550.4 594.2L542.7 578.7L531.0 563.2Z" fill="#1e46e6"/>
<path d="M558.2 578.7L573.7 582.6L577.6 596.2L566.0 602.0Z" fill="#1e46e6"/>
<path d="M519.4 551.6L529.1 563.2L531.0 578.7L523.3 578.7L519.4 567.1Z" fill="#6a0dc8"/>
<path d="M573.7 561.3L583.4 563.2L585.4 574.8L577.6 576.8Z" fill="#6a0dc8"/>
<path d="M569.8 534.1L585.4 528.3L600.9 516.6L608.6 505.0L700.0 505.0L700.0 590.4L686.2 590.4L670.7 586.5L655.2 588.4L643.5 594.2L635.8 590.4L628.0 594.2L620.3 605.9L608.6 621.4L600.9 619.5L595.1 605.9L589.2 590.4L585.4 569.0L577.6 551.6Z" fill="#c90c85"/>
<path d="M624.2 621.4L635.8 609.8L651.3 602.0L666.8 598.1L682.3 607.8L686.2 625.3L694.0 640.8L700.0 646.6L700.0 655.0L628.0 655.0L631.9 636.9Z" fill="#c90c85"/>
<path d="M525.2 605.9L533.0 596.2L544.6 598.1L550.4 607.8L546.6 617.5L534.9 621.4L527.2 617.5Z" fill="#c90c85"/>
<path d="M546.6 640.8L554.3 629.2L566.0 625.3L573.7 636.9L569.8 650.5L558.2 655.0L548.5 655.0Z" fill="#c90c85"/>
<path d="M533.0 569.0L538.8 567.1L539.8 582.6L533.9 582.6Z" fill="#c90c85"/>
<path d="M511.6 505.0L521.3 505.0L519.4 512.8L513.6 512.8Z" fill="#c90c85"/>
<path d="M662.9 505.0L694.0 505.0L695.9 516.6L686.2 530.2L674.6 526.3L666.8 516.6Z" fill="#6a0dc8"/>
<path d="M647.4 574.8L653.2 572.9L655.2 579.7L649.4 581.6Z" fill="#6a0dc8"/>
<path d="M566.0 505.0L577.6 505.0L575.7 512.8L567.9 512.8Z" fill="#6a0dc8"/>
<path d="M573.7 534.1L591.2 532.2L608.6 539.9L608.6 524.4L620.3 508.9L635.8 505.0L659.1 505.0L666.8 520.5L670.7 538.0L674.6 551.6L670.7 569.0L655.2 572.9L643.5 569.0L635.8 578.7L635.8 590.4L624.2 590.4L616.4 602.0L606.7 617.5L600.9 609.8L597.0 590.4L593.1 571.0L585.4 555.4Z" fill="#c06487"/>
<path d="M674.6 549.6L686.2 534.1L700.0 522.5L700.0 563.2L690.1 571.0L678.5 569.0Z" fill="#c06487"/>
<path d="M633.9 621.4L647.4 609.8L661.0 602.0L670.7 605.9L674.6 621.4L670.7 636.9L655.2 644.7L647.4 655.0L635.8 655.0L635.8 636.9Z" fill="#c06487"/>
<path d="M558.2 640.8L564.0 636.9L566.9 644.7L562.1 650.5L557.2 648.5Z" fill="#c06487"/>
<path d="M538.8 596.2L546.6 598.1L548.5 605.9L541.7 605.9Z" fill="#c06487"/>
<path d="M593.1 539.9L604.8 543.8L612.5 553.5L610.6 559.3L600.9 549.6Z" fill="#c90c85"/>
<path d="M639.7 551.6L651.3 549.6L653.2 557.4L643.5 559.3Z" fill="#c90c85"/>
<path d="M622.2 561.3L628.0 559.3L630.0 569.0L624.2 571.0Z" fill="#c90c85"/>
<path d="M614.5 549.6L624.2 545.7L628.0 548.6L620.3 553.5L615.4 553.5Z" fill="#d2883b"/>
<path d="M620.3 512.8L626.1 511.8L627.1 520.5L622.2 521.5Z" fill="#d2883b"/>
<path d="M598.9 571.0L608.6 567.1L610.6 571.0L602.8 578.7L599.9 578.7Z" fill="#d2883b"/>
<path d="M615.4 526.3L618.3 526.0L618.7 531.2L615.8 531.6Z" fill="#d2883b"/>
<path d="M635.8 629.2L645.5 625.3L647.4 631.1L639.7 640.8L636.8 638.9Z" fill="#d2883b"/>
<path d="M659.1 633.0L664.9 631.1L665.9 638.9L660.0 639.8Z" fill="#d2883b"/>
<path d="M664.9 605.9L667.8 604.9L668.4 613.6L665.5 614.0Z" fill="#d2883b"/>
<path d="M695.0 520.5L697.9 520.1L698.3 528.3L695.3 528.7Z" fill="#d2883b"/>
<path d="M500.0 510.8L505.8 514.7L511.6 534.1L515.5 555.4L513.6 574.8L517.5 590.4L519.4 605.9L513.6 617.5L517.5 633.0L525.2 655.0L519.4 655.0L513.6 638.9L507.8 621.4L513.6 609.8L511.6 590.4L507.8 578.7L510.7 563.2L508.7 543.8L503.9 530.2L500.0 524.4Z" fill="#007d00"/>
<path d="M500.0 524.4L505.8 534.1L509.7 553.5L507.8 572.9L505.8 582.6L500.0 586.5Z" fill="#000000"/>
<path d="M500.0 613.6L505.8 617.5L511.6 636.9L515.5 655.0L500.0 655.0Z" fill="#000000"/>
<path d="M500.0 578.7L507.8 582.6L511.6 590.4L515.5 605.9L509.7 613.6L503.9 621.4L500.0 617.5Z" fill="#787878"/>
<path d="M503.9 536.0L509.7 539.9L511.6 555.4L507.8 559.3Z" fill="#787878"/>
<path d="M503.9 621.4L509.7 625.3L515.5 640.8L519.4 655.0L513.6 655.0L509.7 640.8Z" fill="#787878"/>
<path d="M538.8 545.7L546.6 545.7L550.4 553.5L564.0 547.7L571.8 555.4L569.8 565.1L560.1 569.0L556.3 574.8L550.4 569.0L548.5 559.3Z" fill="#007d00"/>
</g>
<g clip-path="url(#t11)">
<path d="M700.0 505.0L900.0 505.0L900.0 655.0L700.0 655.0Z" fill="#0b82de"/>
<path d="M835.8 520.5L847.4 516.6L855.2 524.4L851.3 532.2L839.7 530.2Z" fill="#1e46e6"/>
<path d="M826.1 539.9L835.8 538.0L839.7 549.6L830.0 553.5Z" fill="#1e46e6"/>
<path d="M835.8 565.1L847.4 563.2L851.3 572.9L841.6 578.7Z" fill="#1e46e6"/>
<path d="M866.8 516.6L893.0 512.8L893.0 582.6L882.3 578.7L874.6 563.2L870.7 543.8Z" fill="#1e46e6"/>
<path d="M855.2 598.1L866.8 594.2L870.7 609.8L862.9 621.4L847.4 621.4L835.8 617.5L843.5 605.9Z" fill="#1e46e6"/>
<path d="M700.0 505.0L816.4 505.0L808.6 520.5L804.8 534.1L814.5 553.5L816.4 563.2L808.6 582.6L802.8 594.2L816.4 605.9L828.0 613.6L824.2 625.3L808.6 636.9L800.9 655.0L738.8 655.0L727.2 640.8L711.6 629.2L700.0 621.4Z" fill="#c90c85"/>
<path d="M756.3 505.0L766.0 505.0L764.0 516.6L758.2 524.4L755.3 516.6Z" fill="#6a0dc8"/>
<path d="M783.4 505.0L820.3 505.0L816.4 516.6L806.7 522.5L802.8 534.1L793.1 532.2L785.4 522.5Z" fill="#6a0dc8"/>
<path d="M700.0 524.4L711.6 524.4L719.4 532.2L717.5 547.7L700.0 551.6Z" fill="#6a0dc8"/>
<path d="M725.2 551.6L738.8 549.6L744.6 563.2L758.2 561.3L756.3 572.9L744.6 571.0L733.0 567.1Z" fill="#6a0dc8"/>
<path d="M750.4 578.7L764.0 574.8L781.5 572.9L804.8 569.0L812.5 578.7L804.8 590.4L789.2 598.1L785.4 609.8L789.2 619.5L777.6 621.4L764.0 613.6L756.3 596.2Z" fill="#6a0dc8"/>
<path d="M700.0 563.2L705.8 565.1L707.8 582.6L700.0 586.5Z" fill="#6a0dc8"/>
<path d="M703.9 609.8L715.5 605.9L719.4 617.5L711.6 621.4Z" fill="#6a0dc8"/>
<path d="M711.6 505.0L754.3 505.0L756.3 516.6L758.2 530.2L773.7 534.1L766.0 543.8L754.3 551.6L742.7 547.7L734.9 536.0L723.3 528.3L717.5 516.6Z" fill="#c06487"/>
<path d="M719.4 551.6L727.2 550.6L729.1 563.2L725.2 586.5L719.4 590.4L715.5 578.7Z" fill="#c06487"/>
<path d="M733.0 590.4L742.7 584.5L754.3 588.4L758.2 605.9L762.1 617.5L758.2 633.0L750.4 644.7L744.6 636.9L738.8 621.4L733.0 605.9Z" fill="#c06487"/>
<path d="M766.0 629.2L777.6 621.4L789.2 625.3L793.1 636.9L785.4 648.5L773.7 655.0L766.0 644.7Z" fill="#c06487"/>
<path d="M802.8 617.5L812.5 607.8L824.2 611.7L826.1 619.5L816.4 629.2L804.8 633.0Z" fill="#c06487"/>
<path d="M700.0 578.7L703.9 576.8L705.8 590.4L700.0 592.3Z" fill="#c06487"/>
<path d="M729.1 631.1L742.7 638.9L746.6 655.0L738.8 655.0Z" fill="#c06487"/>
<path d="M739.8 596.2L746.6 594.2L747.5 605.9L741.7 613.6L738.8 605.9Z" fill="#d2883b"/>
<path d="M750.4 611.7L757.2 609.8L758.2 621.4L752.4 623.3Z" fill="#d2883b"/>
<path d="M779.5 627.2L785.4 626.2L786.3 638.9L781.5 640.8Z" fill="#d2883b"/>
<path d="M812.5 613.6L818.3 612.7L818.7 619.5L813.5 620.4Z" fill="#d2883b"/>
<path d="M716.5 571.0L719.4 570.0L719.8 582.6L716.9 583.0Z" fill="#d2883b"/>
<path d="M736.9 522.5L738.8 522.1L739.2 530.2L737.2 530.6Z" fill="#d2883b"/>
<path d="M746.6 565.1L754.3 564.2L756.3 571.0L749.5 572.9Z" fill="#0b82de"/>
<path d="M701.9 532.2L707.8 533.1L707.8 541.9L702.3 540.9Z" fill="#0b82de"/>
<path d="M785.4 600.1L800.9 594.2L808.6 582.6L816.4 598.1L804.8 605.9L787.3 607.8Z" fill="#0b82de"/>
<path d="M700.0 621.4L711.6 629.2L727.2 640.8L738.8 655.0L700.0 655.0Z" fill="#1e46e6"/>
<path d="M700.0 621.4L707.8 625.3L711.6 636.9L703.9 640.8L700.0 638.9Z" fill="#0b82de"/>
<path d="M705.8 642.7L715.5 640.8L716.5 648.5L709.7 652.4Z" fill="#007d00"/>
<path d="M800.9 655.0L808.6 638.9L824.2 627.2L831.9 617.5L843.5 621.4L851.3 621.4L847.4 629.2L835.8 633.0L824.2 640.8L816.4 655.0Z" fill="#1e46e6"/>
<path d="M812.5 655.0L816.4 640.8L831.9 633.0L847.4 625.3L862.9 621.4L866.8 602.0L870.7 592.3L882.3 590.4L893.0 578.7L893.0 655.0Z" fill="#007d00"/>
<path d="M855.2 638.9L862.9 636.9L864.9 644.7L857.1 648.5Z" fill="#1e46e6"/>
<path d="M835.8 640.8L841.6 638.9L842.6 644.7L836.8 645.6Z" fill="#1e46e6"/>
<path d="M870.7 602.0L882.3 598.1L883.3 613.6L880.4 629.2L870.7 629.2L868.8 617.5Z" fill="#000000"/>
<path d="M886.2 613.6L893.0 611.7L893.0 625.3L887.2 623.3Z" fill="#0b82de"/>
<path d="M890.1 636.9L892.4 636.9L892.4 642.7L890.5 643.1Z" fill="#c90c85"/>
<path d="M886.2 505.0L893.0 505.0L893.0 524.4L889.1 522.5Z" fill="#007d00"/>
</g>
<g clip-path="url(#t12)">
<path d="M300.0 655.0L500.0 655.0L500.0 805.0L300.0 805.0Z" fill="#000000"/>
<path d="M300.0 655.0L416.4 655.0L408.6 662.8L393.1 666.6L381.5 670.5L383.4 686.0L391.2 701.6L404.8 711.3L408.6 724.8L404.8 740.4L391.2 742.3L377.6 736.5L366.0 728.7L358.2 717.1L346.6 705.4L331.0 711.3L325.2 719.0L333.0 728.7L348.5 746.2L364.0 763.6L377.6 779.2L385.4 794.7L389.2 805.0L300.0 805.0Z" fill="#1e46e6"/>
<path d="M300.0 666.6L319.4 678.3L338.8 682.2L358.2 689.9L373.7 682.2L381.5 693.8L373.7 705.4L358.2 701.6L346.6 703.5L338.8 693.8L325.2 705.4L319.4 719.0L327.2 736.5L338.8 748.1L354.3 763.6L364.0 779.2L369.8 790.8L358.2 794.7L346.6 775.3L331.0 771.4L311.6 779.2L300.0 790.8Z" fill="#0b82de"/>
<path d="M303.9 655.0L369.8 655.0L367.9 670.5L362.1 682.2L350.4 676.3L334.9 672.5L319.4 666.6L307.8 662.8Z" fill="#6a0dc8"/>
<path d="M303.9 689.9L315.5 688.0L325.2 693.8L315.5 699.6L305.8 697.7Z" fill="#6a0dc8"/>
<path d="M300.0 722.9L307.8 726.8L311.6 738.4L303.9 744.2L300.0 742.3Z" fill="#6a0dc8"/>
<path d="M334.9 655.0L364.0 655.0L362.1 662.8L350.4 666.6L338.8 662.8Z" fill="#c90c85"/>
<path d="M307.8 655.0L321.3 655.0L319.4 659.8L309.7 659.8Z" fill="#c90c85"/>
<path d="M300.0 726.8L304.8 729.7L305.8 738.4L300.0 740.4Z" fill="#c90c85"/>
<path d="M385.4 715.1L397.0 713.2L400.9 722.9L389.2 724.8Z" fill="#0b82de"/>
<path d="M377.6 664.7L391.2 658.9L408.6 660.8L420.3 655.0L447.4 655.0L447.4 666.6L435.8 674.4L420.3 676.3L404.8 684.1L397.0 693.8L400.9 709.3L391.2 701.6L383.4 686.0Z" fill="#007d00"/>
<path d="M325.2 715.1L346.6 705.4L358.2 711.3L366.0 726.8L381.5 736.5L404.8 740.4L408.6 724.8L404.8 711.3L420.3 719.0L435.8 724.8L447.4 732.6L464.9 728.7L466.8 746.2L461.0 763.6L453.2 769.5L435.8 763.6L439.7 779.2L424.2 794.7L408.6 785.0L393.1 775.3L377.6 759.8L364.0 744.2L348.5 728.7L334.9 722.9Z" fill="#007d00"/>
<path d="M325.2 719.0L333.0 732.6L348.5 746.2L364.0 763.6L377.6 779.2L385.4 794.7L381.5 796.6L371.8 781.1L358.2 765.6L342.7 750.1L327.2 734.5Z" fill="#007d00"/>
<path d="M311.6 805.0L319.4 786.9L331.0 773.3L346.6 775.3L358.2 790.8L369.8 790.8L385.4 794.7L389.2 805.0Z" fill="#007d00"/>
<path d="M334.9 790.8L346.6 786.9L352.4 796.6L342.7 802.4Z" fill="#005a00"/>
<path d="M447.4 655.0L500.0 655.0L500.0 713.2L486.2 719.0L482.3 701.6L470.7 688.0L455.2 689.9L447.4 682.2L435.8 674.4Z" fill="#007d00"/>
<path d="M325.2 695.7L334.9 692.8L341.7 701.6L333.0 706.4L326.2 704.5Z" fill="#007d00"/>
<path d="M300.0 666.6L304.8 670.5L304.8 676.3L300.0 674.4Z" fill="#007d00"/>
<path d="M404.8 680.2L420.3 676.3L435.8 674.4L447.4 682.2L455.2 689.9L470.7 688.0L482.3 689.9L482.3 703.5L500.0 713.2L500.0 746.2L482.3 748.1L470.7 755.9L462.9 752.0L466.8 736.5L464.9 728.7L447.4 732.6L435.8 724.8L443.5 713.2L443.5 699.6L431.9 691.9L416.4 686.0L404.8 691.9L400.9 701.6L395.1 697.7L397.0 688.0Z" fill="#787878"/>
<path d="M331.0 722.9L348.5 730.7L364.0 746.2L377.6 761.7L393.1 777.2L408.6 786.9L424.2 796.6L428.0 790.8L408.6 783.0L393.1 773.3L377.6 757.8L364.0 742.3L348.5 726.8L334.9 721.9Z" fill="#787878"/>
<path d="M428.0 755.9L439.7 752.0L447.4 759.8L435.8 767.5L429.0 763.6Z" fill="#787878"/>
<path d="M373.7 769.5L381.5 783.0L385.4 790.8L381.5 791.8L376.6 783.0Z" fill="#787878"/>
<path d="M431.9 660.8L447.4 658.9L447.4 664.7L435.8 670.5Z" fill="#787878"/>
<path d="M397.0 693.8L404.8 688.0L416.4 687.0L431.9 692.8L443.5 699.6L443.5 713.2L435.8 721.0L420.3 717.1L404.8 709.3Z" fill="#000000"/>
<path d="M453.2 707.4L464.9 701.6L482.3 697.7L482.3 713.2L474.6 721.0L462.9 722.9L455.2 717.1Z" fill="#000000"/>
<path d="M447.4 655.0L500.0 655.0L500.0 658.9L486.2 656.9L470.7 662.8L455.2 660.8Z" fill="#000000"/>
<path d="M424.2 740.4L435.8 740.4L433.9 752.0L426.1 752.0Z" fill="#000000"/>
<path d="M484.3 732.6L500.0 730.7L500.0 736.5L485.3 737.4Z" fill="#343434"/>
<path d="M431.9 707.4L435.8 707.4L435.8 713.2L431.9 713.2Z" fill="#343434"/>
<path d="M482.3 672.5L500.0 666.6L500.0 709.3L490.1 705.4L486.2 693.8L484.3 682.2Z" fill="#1e46e6"/>
<path d="M492.0 689.9L500.0 688.0L500.0 705.4L494.0 703.5Z" fill="#0b82de"/>
<path d="M495.9 699.6L498.8 699.2L499.0 702.5L496.1 702.9Z" fill="#c90c85"/>
</g>
<g clip-path="url(#t13)">
<path d="M500.0 655.0L700.0 655.0L700.0 805.0L500.0 805.0Z" fill="#000000"/>
<path d="M500.0 655.0L700.0 655.0L700.0 672.5L694.0 682.2L686.2 699.6L682.3 709.3L674.6 721.0L666.8 736.5L659.1 746.2L647.4 750.1L635.8 748.1L624.2 752.0L608.6 752.0L597.0 753.9L591.2 752.0L585.4 744.2L577.6 740.4L564.0 740.4L550.4 742.3L534.9 742.3L525.2 736.5L519.4 730.7L507.8 728.7L500.0 726.8Z" fill="#007d00"/>
<path d="M525.2 736.5L534.9 742.3L550.4 742.3L564.0 740.4L573.7 740.4L575.7 746.2L564.0 746.2L546.6 746.2L531.0 745.2Z" fill="#787878"/>
<path d="M575.7 742.3L585.4 744.2L591.2 755.9L589.2 763.6L581.5 767.5L571.8 769.5L575.7 759.8L577.6 750.1Z" fill="#787878"/>
<path d="M616.4 750.1L624.2 752.0L635.8 748.1L635.8 753.9L626.1 756.8L618.3 754.9Z" fill="#787878"/>
<path d="M659.1 746.2L666.8 738.4L668.8 744.2L661.0 750.1Z" fill="#787878"/>
<path d="M500.0 722.9L507.8 722.9L511.6 728.7L500.0 729.7Z" fill="#787878"/>
<path d="M500.0 740.4L505.8 748.1L511.6 755.9L505.8 757.8L500.0 753.9Z" fill="#787878"/>
<path d="M501.9 750.1L508.7 749.1L510.7 754.9L503.9 755.9Z" fill="#007d00"/>
<path d="M598.0 768.5L607.7 767.1L607.7 769.8L598.9 771.4Z" fill="#007d00"/>
<path d="M666.8 691.9L678.5 684.1L690.1 684.1L700.0 680.2L700.0 693.8L694.0 699.6L686.2 697.7L680.4 693.8L670.7 694.8Z" fill="#787878"/>
<path d="M674.6 688.0L682.3 684.1L684.3 690.9L678.5 691.9Z" fill="#343434"/>
<path d="M694.0 707.4L700.0 705.4L700.0 713.2L695.0 713.2Z" fill="#787878"/>
<path d="M500.0 655.0L511.6 655.0L507.8 658.9L500.0 659.8Z" fill="#787878"/>
<path d="M505.8 678.3L511.6 662.8L523.3 655.0L700.0 655.0L700.0 670.5L686.2 674.4L678.5 689.9L674.6 705.4L666.8 719.0L655.2 728.7L639.7 730.7L624.2 740.4L608.6 746.2L597.0 748.1L591.2 736.5L581.5 728.7L564.0 734.5L546.6 734.5L531.0 730.7L517.5 721.0L507.8 709.3L503.9 693.8Z" fill="#1e46e6"/>
<path d="M505.8 680.2L517.5 678.3L521.3 689.9L511.6 693.8L505.8 689.9Z" fill="#007d00"/>
<path d="M581.5 728.7L591.2 726.8L597.0 736.5L593.1 746.2L585.4 740.4Z" fill="#007d00"/>
<path d="M507.8 674.4L519.4 662.8L538.8 658.9L558.2 666.6L566.0 678.3L569.8 693.8L593.1 697.7L616.4 693.8L635.8 697.7L655.2 693.8L666.8 686.0L678.5 674.4L686.2 672.5L678.5 689.9L670.7 709.3L659.1 721.0L647.4 724.8L635.8 726.8L624.2 732.6L612.5 740.4L602.8 742.3L600.9 730.7L593.1 722.9L577.6 724.8L558.2 728.7L538.8 724.8L523.3 717.1L511.6 705.4L507.8 689.9Z" fill="#0b82de"/>
<path d="M536.9 678.3L546.6 666.6L558.2 658.9L569.8 655.0L694.0 655.0L686.2 666.6L674.6 672.5L666.8 682.2L655.2 691.9L635.8 693.8L616.4 691.9L593.1 693.8L573.7 691.9L558.2 688.0L542.7 686.0Z" fill="#6a0dc8"/>
<path d="M515.5 703.5L538.8 699.6L566.0 701.6L597.0 703.5L635.8 701.6L666.8 697.7L678.5 699.6L674.6 709.3L659.1 715.1L635.8 719.0L624.2 726.8L612.5 736.5L604.8 738.4L602.8 726.8L593.1 719.0L573.7 721.0L554.3 722.9L534.9 719.0L519.4 711.3Z" fill="#6a0dc8"/>
<path d="M540.7 678.3L550.4 668.6L564.0 660.8L577.6 655.0L690.1 655.0L682.3 664.7L670.7 670.5L662.9 680.2L647.4 688.0L631.9 684.1L616.4 688.0L597.0 689.9L577.6 686.0L558.2 686.0L544.6 684.1Z" fill="#c90c85"/>
<path d="M517.5 704.5L538.8 701.6L566.0 703.5L597.0 705.4L635.8 703.5L666.8 698.6L676.5 700.6L672.6 707.4L655.2 713.2L635.8 716.1L620.3 719.0L616.4 728.7L608.6 734.5L604.8 728.7L608.6 719.0L593.1 715.1L573.7 718.0L554.3 720.0L534.9 716.1L521.3 710.3Z" fill="#c90c85"/>
<path d="M511.6 664.7L519.4 663.7L525.2 670.5L517.5 673.4L512.6 670.5Z" fill="#c90c85"/>
<path d="M579.5 666.6L593.1 660.8L608.6 658.9L620.3 662.8L616.4 670.5L620.3 678.3L608.6 684.1L593.1 684.1L583.4 678.3Z" fill="#c06487"/>
<path d="M566.0 676.3L575.7 674.4L577.6 680.2L567.9 682.2Z" fill="#c06487"/>
<path d="M624.2 655.0L647.4 655.0L655.2 662.8L643.5 674.4L635.8 678.3L631.9 670.5L635.8 662.8Z" fill="#c06487"/>
<path d="M655.2 655.0L674.6 655.0L670.7 664.7L659.1 666.6Z" fill="#c06487"/>
<path d="M519.4 704.5L538.8 702.5L564.0 704.5L566.0 711.3L554.3 716.1L534.9 714.2L521.3 709.3Z" fill="#c06487"/>
<path d="M577.6 708.3L600.9 705.4L635.8 703.5L666.8 698.6L674.6 701.6L666.8 707.4L647.4 711.3L628.0 714.2L608.6 715.1L589.2 713.2Z" fill="#c06487"/>
<path d="M521.3 705.8L538.8 703.9L558.2 705.8L556.3 712.2L538.8 713.2L525.2 710.3Z" fill="#d2883b"/>
<path d="M600.9 707.4L620.3 705.4L631.9 706.4L630.0 713.2L616.4 714.2L602.8 713.2Z" fill="#d2883b"/>
<path d="M643.5 704.5L655.2 702.5L655.2 707.4L645.5 709.3Z" fill="#d2883b"/>
<path d="M585.4 674.4L591.2 673.4L591.6 677.3L585.7 677.9Z" fill="#d2883b"/>
<path d="M616.4 663.7L620.3 663.3L620.7 666.6L616.8 667.0Z" fill="#d2883b"/>
<path d="M664.9 662.8L667.8 662.4L668.0 666.6L665.1 667.0Z" fill="#d2883b"/>
<path d="M533.0 707.4L550.4 706.4L551.4 711.3L534.9 712.2Z" fill="#fac431"/>
<path d="M539.8 708.3L543.6 708.0L543.8 710.9L540.0 711.3Z" fill="#ffff00"/>
<path d="M524.2 790.8L536.9 788.9L536.9 795.6L525.2 796.6Z" fill="#1e46e6"/>
<path d="M529.1 795.6L536.9 795.1L536.9 797.6L529.1 798.2Z" fill="#007d00"/>
<path d="M642.6 776.2L656.2 775.3L655.2 781.1L643.5 782.1Z" fill="#1e46e6"/>
<path d="M641.6 781.1L653.2 781.1L653.2 786.9L644.5 786.9Z" fill="#007d00"/>
</g>
<g clip-path="url(#t14)">
<path d="M700.0 655.0L900.0 655.0L900.0 805.0L700.0 805.0Z" fill="#000000"/>
<path d="M700.0 655.0L824.2 655.0L826.1 666.6L824.2 689.9L828.0 705.4L831.9 719.0L843.5 726.8L843.5 738.4L847.4 746.2L851.3 755.9L843.5 763.6L837.7 779.2L835.8 805.0L762.1 805.0L754.3 794.7L752.4 779.2L748.5 752.0L750.4 721.0L744.6 719.0L731.0 726.8L721.3 726.8L719.4 717.1L700.0 713.2Z" fill="#1e46e6"/>
<path d="M700.0 670.5L707.8 678.3L717.5 674.4L721.3 682.2L731.0 684.1L744.6 680.2L738.8 693.8L734.9 707.4L744.6 703.5L750.4 711.3L744.6 719.0L731.0 726.8L721.3 726.8L719.4 717.1L700.0 713.2L700.0 689.9Z" fill="#007d00"/>
<path d="M700.0 691.9L711.6 690.9L721.3 695.7L719.4 713.2L707.8 711.3L700.0 709.3Z" fill="#787878"/>
<path d="M700.0 686.0L705.8 687.0L705.8 692.8L700.0 692.8Z" fill="#000000"/>
<path d="M824.2 655.0L893.0 655.0L893.0 732.6L886.2 699.6L882.3 680.2L870.7 670.5L862.9 674.4L855.2 664.7L835.8 656.9L828.0 660.8Z" fill="#007d00"/>
<path d="M835.8 748.1L847.4 740.4L853.2 752.0L861.0 750.1L866.8 744.2L864.9 755.9L853.2 763.6L847.4 779.2L839.7 805.0L835.8 805.0L837.7 779.2L839.7 763.6Z" fill="#007d00"/>
<path d="M828.0 699.6L833.9 696.7L833.9 705.4L829.0 707.4Z" fill="#007d00"/>
<path d="M769.8 805.0L777.6 796.6L791.2 798.5L800.9 804.4L808.6 798.5L824.2 798.5L835.8 805.0Z" fill="#007d00"/>
<path d="M800.9 800.5L808.6 798.5L816.4 802.4L812.5 805.0L802.8 805.0Z" fill="#1e46e6"/>
<path d="M758.2 655.0L816.4 655.0L820.3 674.4L816.4 689.9L804.8 689.9L797.0 705.4L800.9 721.0L793.1 732.6L777.6 728.7L764.0 732.6L758.2 744.2L754.3 763.6L750.4 752.0L752.4 728.7L758.2 709.3L750.4 693.8L738.8 678.3L725.2 666.6L711.6 662.8L700.0 666.6L700.0 655.0Z" fill="#0b82de"/>
<path d="M789.2 771.4L808.6 755.9L824.2 748.1L835.8 755.9L824.2 767.5L808.6 779.2L793.1 790.8L777.6 798.5L766.0 796.6L777.6 783.0Z" fill="#0b82de"/>
<path d="M820.3 721.0L835.8 722.9L839.7 736.5L828.0 740.4L820.3 732.6Z" fill="#0b82de"/>
<path d="M777.6 693.8L789.2 689.9L793.1 705.4L783.4 719.0L775.7 713.2Z" fill="#1e46e6"/>
<path d="M727.2 674.4L738.8 680.2L742.7 693.8L734.9 697.7L729.1 686.0Z" fill="#1e46e6"/>
<path d="M744.6 705.4L752.4 703.5L754.3 713.2L746.6 715.1Z" fill="#007d00"/>
<path d="M752.4 722.9L757.2 721.0L758.2 728.7L753.3 729.7Z" fill="#007d00"/>
<path d="M821.2 783.0L828.0 781.1L828.0 786.9L822.2 788.9Z" fill="#007d00"/>
<path d="M830.0 746.2L839.7 743.3L838.7 752.0L831.9 753.0Z" fill="#007d00"/>
<path d="M797.0 689.9L808.6 674.4L814.5 664.7L820.3 666.6L824.2 689.9L828.0 705.4L830.0 721.0L824.2 730.7L812.5 732.6L800.9 740.4L791.2 752.0L785.4 763.6L777.6 779.2L766.0 794.7L756.3 794.7L758.2 775.3L762.1 755.9L766.0 740.4L777.6 728.7L791.2 730.7L797.0 719.0L798.9 703.5Z" fill="#6a0dc8"/>
<path d="M700.0 662.8L707.8 660.8L711.6 668.6L705.8 672.5L700.0 670.5Z" fill="#6a0dc8"/>
<path d="M750.4 678.3L758.2 680.2L758.2 688.0L751.4 687.0Z" fill="#6a0dc8"/>
<path d="M800.9 701.6L806.7 693.8L816.4 689.9L822.2 699.6L826.1 721.0L816.4 728.7L804.8 732.6L793.1 738.4L785.4 746.2L781.5 740.4L793.1 730.7L800.9 722.9L802.8 711.3Z" fill="#c90c85"/>
<path d="M766.0 763.6L773.7 753.9L781.5 755.9L785.4 767.5L781.5 773.3L771.8 771.4Z" fill="#c90c85"/>
<path d="M760.1 781.1L765.0 780.7L765.4 785.9L760.5 786.3Z" fill="#c90c85"/>
<path d="M811.5 669.5L816.4 669.0L817.0 675.4L812.1 676.0Z" fill="#c90c85"/>
<path d="M742.7 655.0L785.4 655.0L781.5 664.7L773.7 670.5L764.0 668.6L754.3 670.5L748.5 664.7Z" fill="#c90c85"/>
<path d="M806.7 699.6L812.5 693.8L818.3 696.7L818.3 711.3L810.6 715.1L806.7 709.3Z" fill="#c06487"/>
<path d="M804.8 721.0L814.5 717.1L814.5 722.9L806.7 726.8Z" fill="#c06487"/>
<path d="M746.6 655.0L758.2 655.0L756.3 662.8L749.5 663.7Z" fill="#c06487"/>
<path d="M877.5 748.1L882.3 738.4L889.1 732.6L893.0 730.7L893.0 767.5L886.2 763.6L880.4 757.8Z" fill="#1e46e6"/>
<path d="M878.5 748.1L883.3 740.4L889.1 738.4L892.0 748.1L889.1 759.8L883.3 757.8Z" fill="#6a0dc8"/>
<path d="M881.4 746.2L885.3 741.3L889.1 744.2L889.1 753.9L884.3 754.9Z" fill="#c90c85"/>
</g>
<g clip-path="url(#t15)">
<path d="M300.0 800.0L396.0 800.0L397.5 817.5L401.8 829.1L406.2 837.8L403.3 845.1L393.1 837.8L381.5 827.6L366.9 817.5L352.4 810.2L340.7 808.7L337.8 823.3L336.4 843.6L329.1 861.1L317.5 866.9L300.0 875.7Z" fill="#007d00"/>
<path d="M300.0 800.0L314.5 800.0L316.0 817.5L314.5 840.7L311.6 858.2L300.0 862.6Z" fill="#1e46e6"/>
<path d="M300.0 800.0L311.6 800.0L310.2 814.5L300.0 823.3Z" fill="#0b82de"/>
<path d="M362.6 800.0L384.4 800.0L381.5 811.6L369.8 813.1L364.0 807.3Z" fill="#1e46e6"/>
<path d="M374.2 823.3L387.3 827.6L396.0 832.0L406.2 836.4L404.8 845.1L393.1 839.3L381.5 829.1Z" fill="#787878"/>
<path d="M330.6 821.8L340.7 821.0L340.7 829.1L332.0 829.7Z" fill="#787878"/>
<path d="M324.7 855.3L332.0 853.8L330.6 861.1L324.7 861.7Z" fill="#787878"/>
<path d="M593.9 882.9L600.0 881.5L600.0 887.3L595.3 887.3Z" fill="#007d00"/>
</g>
<g clip-path="url(#t16)">
<path d="M601.5 829.1L604.4 816.0L611.6 810.2L618.9 808.7L621.8 820.4L629.1 827.6L637.8 832.0L642.2 839.3L634.9 846.6L626.2 849.5L616.0 846.6L613.1 834.9L602.9 833.5Z" fill="#1e46e6"/>
<path d="M604.4 820.4L611.6 813.1L617.5 814.5L617.5 826.2L608.7 829.1Z" fill="#0b82de"/>
<path d="M605.8 823.3L613.1 817.5L620.4 821.8L621.8 829.1L632.0 833.5L637.8 837.8L632.0 843.6L624.7 840.7L617.5 832.0L608.7 829.1Z" fill="#6a0dc8"/>
<path d="M610.2 820.4L614.5 819.8L614.5 823.3L610.5 823.3Z" fill="#c90c85"/>
<path d="M624.7 833.5L627.6 833.5L629.1 839.3L625.6 839.3Z" fill="#c90c85"/>
<path d="M613.1 832.0L618.9 830.6L619.8 836.4L614.5 836.4Z" fill="#007d00"/>
<path d="M681.5 848.0L687.3 840.7L692.5 836.4L697.5 843.6L703.3 853.8L706.2 859.7L697.5 861.1L690.2 859.7L685.8 853.8Z" fill="#1e46e6"/>
<path d="M688.7 846.6L693.1 842.2L698.9 852.4L694.6 856.7Z" fill="#0b82de"/>
<path d="M682.9 846.6L687.3 843.6L688.7 850.9Z" fill="#007d00"/>
<path d="M697.5 858.2L707.1 857.6L706.2 861.1L697.5 861.7Z" fill="#007d00"/>
<path d="M600.0 882.9L608.7 882.1L611.1 885.0L601.5 887.3L600.0 886.7Z" fill="#007d00"/>
<path d="M758.6 800.0L841.5 800.0L835.7 808.7L827.0 818.9L816.8 820.4L809.5 813.1L800.8 817.5L790.6 818.9L780.4 808.7L765.9 807.3Z" fill="#007d00"/>
<path d="M759.5 800.0L771.7 800.0L765.9 805.8Z" fill="#1e46e6"/>
<path d="M786.2 800.0L800.8 800.0L797.9 803.5L787.7 802.9Z" fill="#1e46e6"/>
<path d="M829.9 800.0L835.7 800.0L832.8 802.3Z" fill="#1e46e6"/>
</g>
<g clip-path="url(#t17)">
<path d="M600.0 234.1L614.5 225.4L629.1 221.0L639.3 216.6L655.3 215.2L656.7 222.5L649.5 231.2L637.8 237.0L640.7 248.6L646.6 263.2L664.0 271.9L675.7 267.6L687.3 258.8L698.9 248.6L710.6 257.4L719.3 267.6L722.2 289.4L733.9 295.2L736.8 306.8L728.0 315.6L733.9 330.1L751.3 333.0L757.1 344.7L751.3 355.1L600.0 355.1Z" fill="#007d00"/>
<path d="M618.9 241.4L632.0 239.9L634.9 245.7L621.8 245.7Z" fill="#787878"/>
<path d="M643.6 229.7L653.8 229.7L653.8 232.6L643.6 232.6Z" fill="#787878"/>
<path d="M600.0 257.4L611.6 248.6L620.4 254.5L632.0 260.3L646.6 271.9L662.6 277.7L678.6 263.2L690.2 257.4L696.0 263.2L684.4 271.9L675.7 286.5L681.5 301.0L690.2 315.6L687.3 333.0L696.0 344.7L710.6 341.8L713.5 355.1L600.0 355.1Z" fill="#1e46e6"/>
<path d="M646.6 292.3L658.2 286.5L669.8 280.7L672.7 292.3L664.0 303.9L652.4 301.0Z" fill="#007d00"/>
<path d="M658.2 321.4L672.7 315.6L684.4 321.4L687.3 335.9L675.7 355.1L664.0 355.1L666.9 335.9Z" fill="#007d00"/>
<path d="M698.9 303.9L707.7 295.2L722.2 298.1L728.0 315.6L730.9 330.1L722.2 338.9L716.4 327.2L707.7 321.4L700.4 315.6Z" fill="#000000"/>
<path d="M687.3 321.4L693.1 318.5L696.0 333.0L690.2 335.9Z" fill="#000000"/>
<path d="M600.0 271.9L611.6 269.0L623.3 277.7L637.8 286.5L649.5 301.0L649.5 315.6L634.9 321.4L617.5 315.6L605.8 301.0L600.0 301.0Z" fill="#0b82de"/>
<path d="M611.6 292.3L620.4 286.5L632.0 292.3L643.6 306.8L646.6 317.0L634.9 317.0L620.4 306.8Z" fill="#6a0dc8"/>
<path d="M618.9 298.1L624.7 292.3L634.9 301.0L643.6 314.1L636.4 315.6L624.7 306.8Z" fill="#c90c85"/>
<path d="M600.0 279.2L607.3 280.7L605.8 286.5L600.0 287.9Z" fill="#6a0dc8"/>
<path d="M665.5 298.1L672.7 292.3L680.0 301.0L678.6 315.6L669.8 318.5L665.5 309.8Z" fill="#0b82de"/>
<path d="M693.1 318.5L701.8 315.6L706.2 330.1L698.9 335.9Z" fill="#1e46e6"/>
<path d="M611.6 338.9L629.1 333.0L646.6 335.9L658.2 344.7L652.4 355.1L611.6 355.1Z" fill="#0b82de"/>
<path d="M620.4 341.8L632.0 335.9L643.6 340.3L646.6 355.1L623.3 355.1Z" fill="#6a0dc8"/>
<path d="M627.6 344.7L634.9 340.3L640.7 347.6L637.8 355.1L629.1 355.1Z" fill="#c90c85"/>
<path d="M600.0 312.7L607.3 315.6L610.2 330.1L602.9 338.9L600.0 338.9Z" fill="#343434"/>
<path d="M600.0 315.6L603.5 317.0L602.9 321.4L600.0 321.4Z" fill="#787878"/>
<path d="M728.0 303.9L739.7 292.3L745.5 283.6L751.3 274.8L762.9 279.2L770.2 266.1L779.0 258.8L786.2 266.1L793.5 258.8L803.7 267.6L815.3 273.4L824.1 271.9L827.0 263.2L838.6 258.8L850.2 267.6L861.9 280.7L867.7 301.0L879.3 318.5L892.4 330.1L892.4 355.1L751.3 355.1L745.5 344.7L751.3 333.0L736.8 327.2L730.9 315.6Z" fill="#1e46e6"/>
<path d="M786.2 263.2L793.5 258.2L803.7 267.6L815.3 272.5L809.5 277.7L797.9 274.8Z" fill="#007d00"/>
<path d="M822.6 271.9L824.1 257.4L837.1 257.4L847.3 266.1L832.8 267.6L827.0 274.8Z" fill="#007d00"/>
<path d="M847.3 267.6L856.1 271.9L866.2 289.4L864.8 301.0L856.1 306.8L847.3 301.0L853.2 286.5Z" fill="#007d00"/>
<path d="M870.6 318.5L879.3 317.0L892.4 330.1L892.4 341.8L879.3 333.0Z" fill="#007d00"/>
<path d="M762.9 285.0L770.2 280.7L773.1 289.4L765.9 292.3Z" fill="#007d00"/>
<path d="M728.0 301.0L735.3 295.2L736.8 305.4L730.9 306.8Z" fill="#007d00"/>
<path d="M730.9 333.0L739.7 330.1L748.4 335.9L754.2 347.6L751.3 355.1L739.7 355.1L736.8 344.7Z" fill="#007d00"/>
<path d="M739.7 321.4L751.3 303.9L762.9 295.2L780.4 289.4L797.9 286.5L815.3 283.6L832.8 277.7L844.4 280.7L847.3 298.1L856.1 315.6L870.6 327.2L891.0 341.8L892.4 355.1L762.9 355.1L751.3 341.8L742.6 333.0Z" fill="#0b82de"/>
<path d="M742.6 321.4L754.2 315.6L765.9 321.4L762.9 330.1L751.3 333.0Z" fill="#6a0dc8"/>
<path d="M786.2 315.6L797.9 311.2L812.4 315.6L816.8 333.0L809.5 341.8L792.0 341.8L783.3 330.1Z" fill="#6a0dc8"/>
<path d="M803.7 298.1L815.3 293.7L829.9 301.0L824.1 309.8L812.4 306.8Z" fill="#6a0dc8"/>
<path d="M821.1 318.5L832.8 317.0L844.4 327.2L847.3 338.9L838.6 341.8L827.0 333.0Z" fill="#6a0dc8"/>
<path d="M850.2 330.1L861.9 333.0L864.8 341.8L856.1 341.8Z" fill="#6a0dc8"/>
<path d="M786.2 344.7L797.9 347.6L800.8 355.1L789.1 355.1Z" fill="#6a0dc8"/>
<path d="M824.1 341.8L832.8 344.7L829.9 350.5L824.1 349.0Z" fill="#6a0dc8"/>
<path d="M755.7 324.3L760.0 322.8L761.5 327.2L757.1 328.7Z" fill="#c90c85"/>
<path d="M813.9 302.5L818.2 301.0L818.8 305.4L814.7 306.3Z" fill="#c90c85"/>
</g>
<g clip-path="url(#t18)">
<path d="M200.0 450.0L400.0 450.0L400.0 650.0L200.0 650.0Z" fill="#000000"/>
<path d="M200.0 478.8L212.3 476.7L226.7 485.0L247.3 487.0L257.6 478.8L265.8 479.8L267.9 489.1L282.3 491.2L296.7 493.2L298.8 499.4L200.0 499.4Z" fill="#007d00"/>
<path d="M200.0 491.2L220.6 489.1L241.2 490.1L261.7 491.2L282.3 494.2L296.7 497.3L296.7 501.4L200.0 501.4Z" fill="#1e46e6"/>
<path d="M200.0 494.2L230.9 492.2L251.4 494.2L261.7 497.3L200.0 499.4Z" fill="#0b82de"/>
<path d="M251.4 480.9L261.7 479.8L261.7 489.1L252.5 489.1Z" fill="#1e46e6"/>
<path d="M206.2 479.8L224.7 479.8L224.7 485.0L207.2 485.0Z" fill="#787878"/>
<path d="M200.0 456.2L206.2 454.1L205.1 464.4L200.0 466.5Z" fill="#1e46e6"/>
<path d="M200.0 458.2L202.5 458.2L202.5 462.3L200.0 462.3Z" fill="#c90c85"/>
<path d="M222.6 451.0L230.9 450.0L229.8 460.3L225.7 461.3Z" fill="#1e46e6"/>
<path d="M225.7 460.3L229.8 459.3L228.8 465.4L226.7 465.4Z" fill="#007d00"/>
<path d="M263.8 453.1L272.0 452.1L272.0 458.2L264.8 458.2Z" fill="#007d00"/>
<path d="M293.6 468.5L300.8 462.3L298.8 454.1L307.0 453.1L315.2 460.3L321.4 458.2L327.6 462.3L323.5 472.6L331.7 480.9L339.9 485.0L333.7 493.2L323.5 495.3L315.2 491.2L302.9 491.2L298.8 478.8Z" fill="#787878"/>
<path d="M307.0 460.3L321.4 459.3L323.5 466.5L315.2 470.6Z" fill="#007d00"/>
<path d="M315.2 480.9L329.6 480.9L331.7 491.2L319.3 493.2Z" fill="#007d00"/>
<path d="M318.3 461.3L322.4 461.3L322.4 464.8L318.3 464.8Z" fill="#1e46e6"/>
<path d="M342.0 450.0L400.0 450.0L400.0 491.2L391.4 489.1L385.2 480.9L377.0 472.6L364.6 468.5L356.4 462.3L348.1 458.2Z" fill="#007d00"/>
<path d="M354.3 460.3L362.6 461.3L364.6 468.5L377.0 470.6L379.0 476.7L370.8 474.7L358.4 468.5Z" fill="#787878"/>
<path d="M389.3 478.8L397.5 476.7L397.5 489.1L391.4 488.1Z" fill="#787878"/>
<path d="M368.7 454.1L381.1 450.0L400.0 450.0L400.0 462.3L385.2 460.3L374.9 460.3Z" fill="#1e46e6"/>
<path d="M385.2 450.0L400.0 450.0L400.0 458.2L389.3 456.2Z" fill="#0b82de"/>
<path d="M354.3 478.8L361.5 478.8L361.5 482.9L354.3 482.9Z" fill="#787878"/>
<path d="M200.0 540.5L212.3 540.5L224.7 532.3L241.2 528.2L257.6 522.0L272.0 524.1L282.3 522.0L296.7 520.0L307.0 517.9L319.3 522.0L325.5 528.2L315.2 532.3L298.8 532.3L282.3 536.4L270.0 540.5L267.9 552.9L259.7 559.1L261.7 573.5L257.6 585.8L249.4 598.1L251.4 610.5L241.2 614.6L235.0 622.8L224.7 612.6L216.5 594.0L208.2 581.7L200.0 577.6Z" fill="#007d00"/>
<path d="M259.7 559.1L270.0 540.5L286.4 536.4L302.9 532.3L319.3 530.2L327.6 511.7L331.7 503.5L400.0 503.5L400.0 650.0L282.3 650.0L278.2 635.2L267.9 618.7L261.7 606.4L259.7 589.9L263.8 573.5Z" fill="#1e46e6"/>
<path d="M352.3 491.2L364.6 487.0L381.1 489.1L400.0 493.2L400.0 503.5L344.0 503.5Z" fill="#1e46e6"/>
<path d="M327.6 494.2L344.0 491.2L352.3 491.2L344.0 502.5L327.6 501.4Z" fill="#007d00"/>
<path d="M200.0 499.4L298.8 501.4L300.8 511.7L296.7 520.0L282.3 522.0L267.9 524.1L257.6 520.0L241.2 528.2L224.7 532.3L212.3 540.5L200.0 542.6Z" fill="#1e46e6"/>
<path d="M200.0 501.4L282.3 502.5L296.7 505.6L296.7 515.8L282.3 517.9L267.9 520.0L255.6 517.9L241.2 524.1L224.7 528.2L210.3 536.4L200.0 538.5Z" fill="#0b82de"/>
<path d="M200.0 501.4L278.2 502.5L294.7 507.6L290.5 513.8L272.0 515.8L257.6 513.8L241.2 520.0L224.7 524.1L212.3 532.3L200.0 534.4Z" fill="#6a0dc8"/>
<path d="M200.0 502.5L241.2 501.4L278.2 503.5L286.4 508.6L270.0 512.8L255.6 510.7L241.2 515.8L224.7 521.0L214.4 530.2L206.2 532.3L200.0 528.2Z" fill="#c90c85"/>
<path d="M200.0 503.5L212.3 502.5L224.7 509.7L241.2 505.6L261.7 502.5L274.1 504.5L276.1 508.6L261.7 509.7L241.2 512.8L226.7 517.9L216.5 522.0L210.3 528.2L200.0 522.0Z" fill="#c06487"/>
<path d="M204.1 509.7L212.3 505.6L218.5 513.8L214.4 526.1L208.2 528.2L202.1 520.0Z" fill="#d2883b"/>
<path d="M261.7 503.1L272.0 503.1L272.0 507.6L262.8 508.0Z" fill="#d2883b"/>
<path d="M241.2 508.6L247.3 507.6L248.4 511.7L242.2 512.8Z" fill="#d2883b"/>
<path d="M208.2 522.0L212.3 521.0L214.0 529.2L210.3 530.2Z" fill="#fac431"/>
<path d="M255.6 532.3L263.8 530.2L271.0 536.4L270.0 552.9L261.7 557.0L257.6 565.2L259.7 581.7L253.5 587.9L241.2 583.7L243.2 565.2L247.3 548.8L253.5 542.6Z" fill="#000000"/>
<path d="M200.0 577.6L208.2 581.7L216.5 594.0L224.7 612.6L235.0 624.9L247.3 627.0L255.6 614.6L249.4 606.4L251.4 594.0L241.2 583.7L226.7 581.7L212.3 575.5L200.0 573.5Z" fill="#000000"/>
<path d="M238.1 552.9L243.2 551.9L244.2 569.3L237.0 581.7L226.7 585.8L224.7 581.7L235.0 575.5L240.1 565.2Z" fill="#787878"/>
<path d="M244.2 538.5L255.6 536.4L255.6 546.7L248.4 550.8Z" fill="#1e46e6"/>
<path d="M298.8 513.8L302.9 511.7L302.9 517.9L298.8 518.9Z" fill="#787878"/>
<path d="M315.2 520.0L325.5 520.0L325.5 524.1L315.2 524.1Z" fill="#787878"/>
<path d="M300.8 501.4L327.6 501.4L327.6 520.0L323.5 524.1L315.2 520.0L302.9 511.7Z" fill="#000000"/>
<path d="M200.0 598.1L210.3 606.4L220.6 608.4L232.9 624.9L247.3 627.0L255.6 614.6L261.7 610.5L270.0 622.8L278.2 635.2L282.3 650.0L200.0 650.0Z" fill="#007d00"/>
<path d="M218.5 608.4L226.7 606.4L232.9 620.8L224.7 622.8Z" fill="#1e46e6"/>
<path d="M222.6 631.1L241.2 629.0L247.3 639.3L241.2 650.0L222.6 650.0Z" fill="#1e46e6"/>
<path d="M230.9 637.2L239.1 636.2L240.1 647.5L231.9 648.6Z" fill="#0b82de"/>
<path d="M212.3 612.6L219.5 612.6L220.6 627.0L213.4 627.0Z" fill="#787878"/>
<path d="M245.3 627.0L254.5 624.9L255.6 632.1L246.3 633.1Z" fill="#787878"/>
<path d="M247.3 596.1L252.5 595.1L252.5 602.3L247.3 602.3Z" fill="#787878"/>
<path d="M200.0 610.5L203.1 612.6L202.1 622.8L200.0 622.8Z" fill="#000000"/>
<path d="M270.0 565.2L278.2 548.8L294.7 542.6L311.1 540.5L319.3 548.8L311.1 561.1L302.9 573.5L290.5 581.7L282.3 594.0L286.4 610.5L290.5 627.0L282.3 631.1L274.1 614.6L267.9 594.0Z" fill="#0b82de"/>
<path d="M364.6 503.5L400.0 503.5L400.0 528.2L385.2 522.0L370.8 511.7Z" fill="#0b82de"/>
<path d="M356.4 650.0L370.8 635.2L381.1 614.6L400.0 594.0L400.0 650.0Z" fill="#0b82de"/>
<path d="M278.2 557.0L286.4 546.7L298.8 550.8L311.1 565.2L323.5 573.5L315.2 581.7L298.8 585.8L290.5 598.1L290.5 614.6L298.8 631.1L307.0 650.0L290.5 650.0L284.4 631.1L280.2 606.4L276.1 581.7Z" fill="#6a0dc8"/>
<path d="M360.5 573.5L377.0 565.2L389.3 565.2L397.5 577.6L391.4 598.1L377.0 610.5L364.6 627.0L352.3 650.0L331.7 650.0L344.0 627.0L356.4 606.4Z" fill="#6a0dc8"/>
<path d="M317.3 546.7L327.6 528.2L331.7 509.7L344.0 505.6L356.4 501.4L368.7 509.7L381.1 517.9L393.4 532.3L389.3 542.6L374.9 548.8L368.7 561.1L362.6 581.7L360.5 606.4L352.3 627.0L344.0 650.0L298.8 650.0L290.5 627.0L288.5 606.4L296.7 589.9L315.2 581.7L323.5 565.2Z" fill="#c90c85"/>
<path d="M277.2 557.0L284.4 551.9L290.5 561.1L296.7 573.5L292.6 581.7L286.4 573.5L280.2 565.2Z" fill="#c90c85"/>
<path d="M327.6 532.3L331.7 513.8L344.0 509.7L356.4 515.8L364.6 536.4L364.6 557.0L356.4 573.5L348.1 577.6L339.9 565.2L331.7 557.0L321.4 557.0L319.3 548.8Z" fill="#c06487"/>
<path d="M366.7 517.9L381.1 518.9L382.1 523.0L367.7 523.0Z" fill="#c06487"/>
<path d="M385.2 536.4L393.4 535.4L395.5 542.6L387.2 543.6Z" fill="#c06487"/>
<path d="M290.5 583.7L298.8 581.7L299.8 602.3L291.6 604.3Z" fill="#c06487"/>
<path d="M304.9 604.3L314.2 603.3L314.2 612.6L305.3 613.0Z" fill="#c06487"/>
<path d="M313.2 629.0L323.5 622.8L333.7 627.0L331.7 637.2L319.3 641.4Z" fill="#c06487"/>
<path d="M300.8 641.4L311.1 640.3L319.3 650.0L300.8 650.0Z" fill="#c06487"/>
<path d="M342.0 528.2L348.1 522.0L354.3 532.3L356.4 542.6L364.6 546.7L362.6 565.2L356.4 575.5L348.1 571.4L344.0 561.1L348.1 548.8L342.0 540.5Z" fill="#d2883b"/>
<path d="M319.3 548.8L327.6 544.7L333.7 552.9L325.5 557.0Z" fill="#d2883b"/>
<path d="M323.5 589.9L331.7 581.7L344.0 579.6L348.1 589.9L339.9 602.3L327.6 606.4Z" fill="#d2883b"/>
<path d="M319.3 631.1L325.5 629.0L326.5 635.2L320.4 636.2Z" fill="#d2883b"/>
<path d="M300.8 644.4L309.1 643.4L315.2 650.0L301.9 650.0Z" fill="#d2883b"/>
<path d="M385.2 537.4L392.4 536.4L393.4 541.6L386.2 542.6Z" fill="#d2883b"/>
<path d="M344.0 530.2L348.1 525.1L352.3 532.3L350.2 540.5L345.1 540.5Z" fill="#fac431"/>
<path d="M352.3 548.8L358.4 542.6L362.6 546.7L356.4 554.9Z" fill="#fac431"/>
<path d="M325.5 592.0L333.7 583.7L342.0 581.7L344.0 592.0L335.8 600.2L327.6 602.3Z" fill="#fac431"/>
<path d="M327.6 589.9L335.8 584.8L337.9 589.9L329.6 594.0Z" fill="#ffff00"/>
</g>
<g clip-path="url(#t19)">
<path d="M681.0 287.0L699.7 284.7L722.9 287.0L736.9 303.3L746.2 321.9L755.5 338.2L753.2 359.1L750.9 382.4L743.9 394.1L734.6 396.4L736.9 415.0L734.6 431.3L720.6 433.6L713.6 410.4L704.3 389.4L692.7 373.1L685.7 356.8L683.4 338.2L681.0 314.9Z" fill="#007d00"/>
<path d="M743.9 391.7L753.2 382.4L760.2 387.1L753.2 401.0L739.2 410.4L736.9 401.0Z" fill="#1e46e6"/>
<path d="M699.7 294.0L709.0 290.5L720.6 294.0L722.9 305.6L732.3 319.6L732.3 333.5L739.2 338.2L746.2 356.8L746.2 380.1L739.2 388.2L729.9 389.4L722.9 382.4L718.3 368.5L722.9 356.8L720.6 340.5L711.3 331.2L704.3 317.2L699.7 305.6Z" fill="#000000"/>
<path d="M686.9 312.6L692.7 314.9L695.0 328.9L692.7 338.2L688.0 333.5L686.9 321.9Z" fill="#000000"/>
<path d="M692.7 361.5L702.0 359.1L711.3 373.1L720.6 389.4L727.6 405.7L732.3 415.0L731.1 426.7L722.9 429.0L720.6 417.3L718.3 403.4L709.0 387.1L699.7 377.8L693.9 368.5Z" fill="#000000"/>
<path d="M697.3 317.2L702.0 314.9L709.0 331.2L705.5 335.9L699.7 326.6Z" fill="#1e46e6"/>
</g>
<g clip-path="url(#t20)">
<path d="M328.1 721.5L339.3 723.5L354.1 737.5L368.9 754.8L383.7 777.0L388.6 791.9L380.0 789.4L366.4 772.1L351.6 754.8L336.8 737.5Z" fill="#000000"/>
</g>
</g>
<g fill="none" stroke="#2aa52a" stroke-width="1" shape-rendering="crispEdges">
<circle cx="447.5" cy="500.5" r="123.8"/><circle cx="447.5" cy="500.5" r="247.7"/><circle cx="447.5" cy="500.5" r="371.5"/><circle cx="447.5" cy="500.5" r="495.4"/><circle cx="447.5" cy="500.5" r="619.2"/><line x1="447.5" y1="500.5" x2="447.5" y2="-199.5"/><line x1="447.5" y1="500.5" x2="797.5" y2="-105.7"/><line x1="447.5" y1="500.5" x2="1053.7" y2="150.5"/><line x1="447.5" y1="500.5" x2="1147.5" y2="500.5"/><line x1="447.5" y1="500.5" x2="1053.7" y2="850.5"/><line x1="447.5" y1="500.5" x2="797.5" y2="1106.7"/><line x1="447.5" y1="500.5" x2="447.5" y2="1200.5"/><line x1="447.5" y1="500.5" x2="97.5" y2="1106.7"/><line x1="447.5" y1="500.5" x2="-158.7" y2="850.5"/><line x1="447.5" y1="500.5" x2="-252.5" y2="500.5"/><line x1="447.5" y1="500.5" x2="-158.7" y2="150.5"/><line x1="447.5" y1="500.5" x2="97.5" y2="-105.7"/></g>
<rect x="352.4" y="407.4" width="14" height="11" fill="#000"/><text class="s" x="353.4" y="416.4" fill="#2aa52a">50</text><rect x="527.6" y="407.4" width="14" height="11" fill="#000"/><text class="s" x="528.6" y="416.4" fill="#2aa52a">50</text><rect x="527.6" y="582.6" width="14" height="11" fill="#000"/><text class="s" x="528.6" y="591.6" fill="#2aa52a">50</text><rect x="352.4" y="582.6" width="14" height="11" fill="#000"/><text class="s" x="353.4" y="591.6" fill="#2aa52a">50</text><rect x="261.8" y="319.8" width="20" height="11" fill="#000"/><text class="s" x="262.8" y="328.8" fill="#2aa52a">100</text><rect x="612.2" y="319.8" width="20" height="11" fill="#000"/><text class="s" x="613.2" y="328.8" fill="#2aa52a">100</text><rect x="612.2" y="670.2" width="20" height="11" fill="#000"/><text class="s" x="613.2" y="679.2" fill="#2aa52a">100</text><rect x="261.8" y="670.2" width="20" height="11" fill="#000"/><text class="s" x="262.8" y="679.2" fill="#2aa52a">100</text><rect x="174.3" y="232.3" width="20" height="11" fill="#000"/><text class="s" x="175.3" y="241.3" fill="#2aa52a">150</text><rect x="699.7" y="232.3" width="20" height="11" fill="#000"/><text class="s" x="700.7" y="241.3" fill="#2aa52a">150</text><rect x="699.7" y="757.7" width="20" height="11" fill="#000"/><text class="s" x="700.7" y="766.7" fill="#2aa52a">150</text><rect x="174.3" y="757.7" width="20" height="11" fill="#000"/><text class="s" x="175.3" y="766.7" fill="#2aa52a">150</text><rect x="86.7" y="144.7" width="20" height="11" fill="#000"/><text class="s" x="87.7" y="153.7" fill="#2aa52a">200</text><rect x="787.3" y="144.7" width="20" height="11" fill="#000"/><text class="s" x="788.3" y="153.7" fill="#2aa52a">200</text><rect x="787.3" y="845.3" width="20" height="11" fill="#000"/><text class="s" x="788.3" y="854.3" fill="#2aa52a">200</text><rect x="86.7" y="845.3" width="20" height="11" fill="#000"/><text class="s" x="87.7" y="854.3" fill="#2aa52a">200</text><rect x="-0.9" y="57.1" width="20" height="11" fill="#000"/><text class="s" x="0.1" y="66.1" fill="#2aa52a">250</text><rect x="874.9" y="57.1" width="20" height="11" fill="#000"/><text class="s" x="875.9" y="66.1" fill="#2aa52a">250</text><rect x="874.9" y="932.9" width="20" height="11" fill="#000"/><text class="s" x="875.9" y="941.9" fill="#2aa52a">250</text><rect x="-0.9" y="932.9" width="20" height="11" fill="#000"/><text class="s" x="0.1" y="941.9" fill="#2aa52a">250</text>
<text class="s" transform="translate(272,110) scale(1,1.29)" fill="#b4b4b4">AR_RASS</text><text class="s" transform="translate(454,114) scale(1,1.29)" fill="#b4b4b4">Midhab</text><text class="s" transform="translate(730,98) scale(1,1.29)" fill="#b4b4b4">Majmaah</text><text class="s" transform="translate(762,161) scale(1,1.29)" fill="#b4b4b4">Jalajil</text><text class="s" transform="translate(514,258) scale(1,1.29)" fill="#b4b4b4">Raydah</text><text class="s" transform="translate(710,281) scale(1,1.29)" fill="#b4b4b4">Shaqra</text><text class="s" transform="translate(577,372) scale(1,1.29)" fill="#b4b4b4">Khuff</text><text class="s" transform="translate(865,371) scale(1,1.29)" fill="#b4b4b4">Barra</text><text class="s" transform="translate(492,487) scale(1,1.29)" fill="#b4b4b4">Dawadmi</text><text class="s" transform="translate(694,628) scale(1,1.29)" fill="#b4b4b4">Qafarah</text><text class="s" transform="translate(571,691) scale(1,1.29)" fill="#b4b4b4">Ar_Ruwaydah</text><text class="s" transform="translate(774,748) scale(1,1.29)" fill="#b4b4b4">Ar_Rayn</text><text class="s" transform="translate(444,505) scale(1,1.29)" fill="#ffffff">D</text><text class="s" transform="translate(426,522) scale(1,1.29)" fill="#ffffff">Dawadmi</text></g>
<g fill="#5f9ea0"><rect x="0" y="0" width="1031" height="1"/><rect x="0" y="0" width="1" height="972"/><rect x="0" y="971" width="1031" height="1"/><rect x="1029" y="0" width="2" height="972"/><rect x="0" y="27" width="1031" height="2"/><rect x="0" y="54" width="894" height="1"/><rect x="0" y="946" width="894" height="1"/><rect x="893" y="54" width="1" height="893"/><rect x="928" y="29" width="2" height="943"/></g>
<text class="b" x="477" y="20" fill="#d3d3d3">dBZDawadmi</text>
<text class="b" x="7" y="46" fill="#ffff00">2012/04/22 14:59:40 GMT Composite</text>
<text class="b" x="906" y="46.5" fill="#ffff00">km</text>
<text class="b" x="7" y="964.5" fill="#ffff00">km</text>
<g fill="#ffff00" stroke="none"><rect x="75" y="965" width="1" height="6"/><text class="s" x="59.0" y="961.5">-150</text><rect x="922" y="871" width="6" height="1"/><text class="s" x="889.0" y="875.5">-150</text><rect x="199" y="965" width="1" height="6"/><text class="s" x="182.8" y="961.5">-100</text><rect x="922" y="747" width="6" height="1"/><text class="s" x="889.0" y="751.7">-100</text><rect x="323" y="965" width="1" height="6"/><text class="s" x="309.6" y="961.5">-50</text><rect x="922" y="623" width="6" height="1"/><text class="s" x="895.0" y="627.9">-50</text><rect x="447" y="965" width="1" height="6"/><text class="s" x="441.5" y="961.5">0</text><rect x="922" y="500" width="6" height="1"/><text class="s" x="907.0" y="504.0">0</text><rect x="571" y="965" width="1" height="6"/><text class="s" x="562.4" y="961.5">50</text><rect x="922" y="376" width="6" height="1"/><text class="s" x="901.0" y="380.1">50</text><rect x="695" y="965" width="1" height="6"/><text class="s" x="683.2" y="961.5">100</text><rect x="922" y="252" width="6" height="1"/><text class="s" x="895.0" y="256.3">100</text><rect x="819" y="965" width="1" height="6"/><text class="s" x="807.0" y="961.5">150</text><rect x="922" y="128" width="6" height="1"/><text class="s" x="895.0" y="132.5">150</text></g>
<text class="s" x="971" y="61" fill="#d3d3d3">dBZ</text>
<rect x="940" y="86" width="30" height="25" fill="#d3d3d3"/><rect x="940" y="111" width="30" height="25" fill="#bebebe"/><rect x="940" y="136" width="30" height="25" fill="#fc341c"/><rect x="940" y="161" width="30" height="25" fill="#ff6008"/><rect x="940" y="186" width="30" height="25" fill="#ff9a56"/><rect x="940" y="211" width="30" height="25" fill="#ffff00"/><rect x="940" y="236" width="30" height="25" fill="#fac431"/><rect x="940" y="261" width="30" height="25" fill="#d2883b"/><rect x="940" y="286" width="30" height="25" fill="#c06487"/><rect x="940" y="311" width="30" height="25" fill="#c90c85"/><rect x="940" y="336" width="30" height="25" fill="#6a0dc8"/><rect x="940" y="361" width="30" height="25" fill="#0b82de"/><rect x="940" y="386" width="30" height="25" fill="#1e46e6"/><rect x="940" y="411" width="30" height="25" fill="#007d00"/><rect x="940" y="436" width="30" height="25" fill="#005a00"/><rect x="940" y="461" width="30" height="25" fill="#787878"/><rect x="940" y="486" width="30" height="25" fill="#343434"/><text class="s" x="979" y="89.5" fill="#d3d3d3">70</text><text class="s" x="979" y="114.5" fill="#d3d3d3">66</text><text class="s" x="979" y="139.5" fill="#d3d3d3">62</text><text class="s" x="979" y="164.5" fill="#d3d3d3">58</text><text class="s" x="979" y="189.5" fill="#d3d3d3">54</text><text class="s" x="979" y="214.5" fill="#d3d3d3">50</text><text class="s" x="979" y="239.5" fill="#d3d3d3">45</text><text class="s" x="979" y="264.5" fill="#d3d3d3">40</text><text class="s" x="979" y="289.5" fill="#d3d3d3">35</text><text class="s" x="979" y="314.5" fill="#d3d3d3">30</text><text class="s" x="979" y="339.5" fill="#d3d3d3">25</text><text class="s" x="979" y="364.5" fill="#d3d3d3">20</text><text class="s" x="979" y="389.5" fill="#d3d3d3">15</text><text class="s" x="979" y="414.5" fill="#d3d3d3">10</text><text class="s" x="979" y="439.5" fill="#d3d3d3">5</text><text class="s" x="979" y="464.5" fill="#d3d3d3">0</text><text class="s" x="979" y="489.5" fill="#d3d3d3">-5</text><text class="s" x="979" y="514.5" fill="#d3d3d3">-10</text>
<path d="M940 536.5H970M957 531.5L970 536.5L957 541.5" fill="none" stroke="#ffff00" stroke-width="1"/><text class="s" x="979" y="540.0" fill="#d3d3d3">Rain1</text><path d="M940 561.5H970M957 556.5L970 561.5L957 566.5" fill="none" stroke="#ff0000" stroke-width="1"/><text class="s" x="979" y="565.0" fill="#d3d3d3">Rain2</text><path d="M940 586.5H970M957 581.5L970 586.5L957 591.5" fill="none" stroke="#ff00ff" stroke-width="1"/><text class="s" x="979" y="590.0" fill="#d3d3d3">Rain3</text><path d="M940 611.5H970M957 606.5L970 611.5L957 616.5" fill="none" stroke="#00ff00" stroke-width="1"/><text class="s" x="979" y="615.0" fill="#d3d3d3">Rain4</text><path d="M940 636.5H970M957 631.5L970 636.5L957 641.5" fill="none" stroke="#ffc0cb" stroke-width="1"/><text class="s" x="979" y="640.0" fill="#d3d3d3">Rain5</text><path d="M940 661.5H970M957 656.5L970 661.5L957 666.5" fill="none" stroke="#ffa500" stroke-width="1"/><text class="s" x="979" y="665.0" fill="#d3d3d3">Rain6</text><path d="M940 686.5H970M957 681.5L970 686.5L957 691.5" fill="none" stroke="#00ffff" stroke-width="1"/><text class="s" x="979" y="690.0" fill="#d3d3d3">Rain7</text><path d="M940 711.5H970M957 706.5L970 711.5L957 716.5" fill="none" stroke="#a020f0" stroke-width="1"/><text class="s" x="979" y="715.0" fill="#d3d3d3">Rain8</text><path d="M940 736.5H970M957 731.5L970 736.5L957 741.5" fill="none" stroke="#d2b48c" stroke-width="1"/><text class="s" x="979" y="740.0" fill="#d3d3d3">Rain9</text><path d="M940 761.5H970M957 756.5L970 761.5L957 766.5" fill="none" stroke="#ffff00" stroke-width="1"/><text class="s" x="979" y="765.0" fill="#d3d3d3">Rain10</text>
</svg>
</body></html>
